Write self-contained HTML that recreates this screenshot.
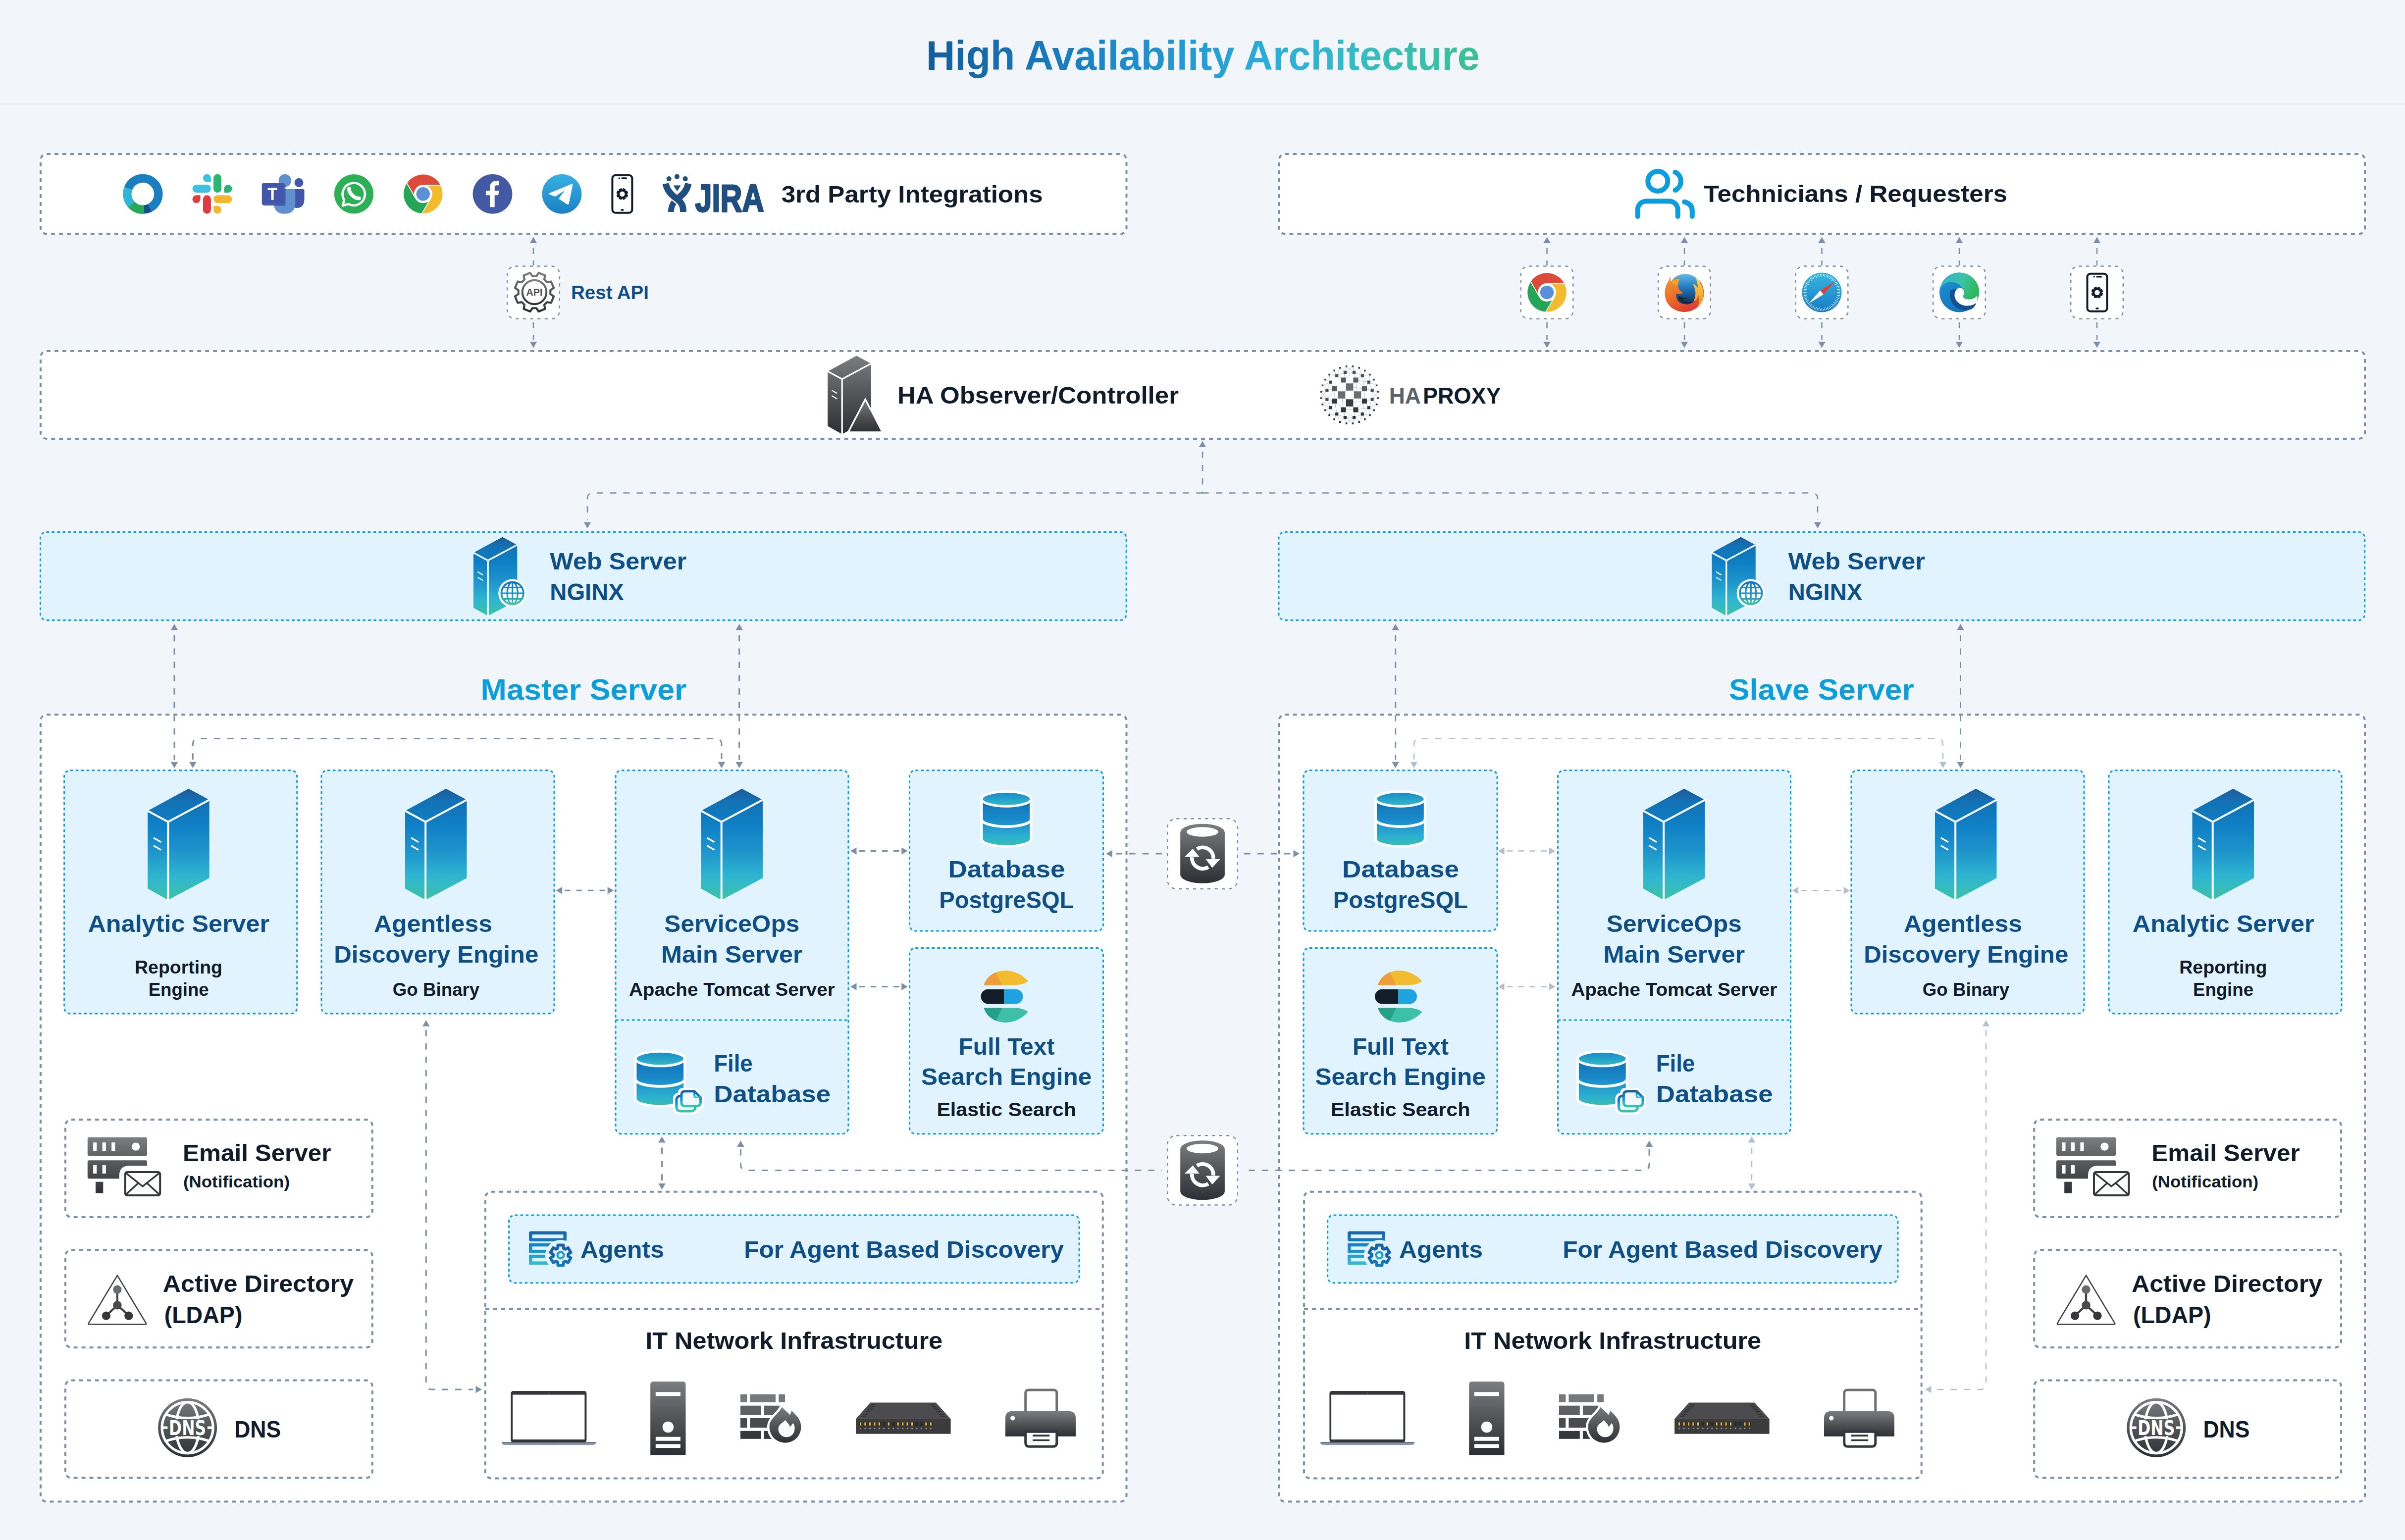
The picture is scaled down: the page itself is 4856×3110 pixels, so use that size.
<!DOCTYPE html>
<html><head><meta charset="utf-8"><title>High Availability Architecture</title>
<style>
html,body{margin:0;padding:0;background:#f2f5fa;}
body{width:4856px;height:3110px;overflow:hidden;}
svg{display:block;font-family:"Liberation Sans",sans-serif;}
</style></head><body>
<svg width="4856" height="3110" viewBox="0 0 4856 3110">
<defs>

<linearGradient id="tg" x1="0" y1="0" x2="1" y2="0"><stop offset="0" stop-color="#145d9b"/><stop offset="0.3" stop-color="#1a84c7"/><stop offset="0.62" stop-color="#2badda"/><stop offset="0.8" stop-color="#36bdc0"/><stop offset="1" stop-color="#3cc093"/></linearGradient>
<linearGradient id="bg" x1="0" y1="0" x2="0" y2="1"><stop offset="0" stop-color="#1f5a98"/><stop offset="0.12" stop-color="#1272b6"/><stop offset="0.32" stop-color="#0f7fc4"/><stop offset="0.55" stop-color="#1d93cc"/><stop offset="0.8" stop-color="#2fb6d0"/><stop offset="1" stop-color="#3dc2a2"/></linearGradient>
<linearGradient id="gg" x1="0" y1="0" x2="0" y2="1"><stop offset="0" stop-color="#7c7d80"/><stop offset="0.5" stop-color="#535456"/><stop offset="1" stop-color="#2c3035"/></linearGradient>
<linearGradient id="tel" x1="0" y1="0" x2="0" y2="1"><stop offset="0" stop-color="#38b0e3"/><stop offset="1" stop-color="#1a80c4"/></linearGradient>
<linearGradient id="saf" x1="0" y1="0" x2="0" y2="1"><stop offset="0" stop-color="#33b8e0"/><stop offset="1" stop-color="#1a7ac6"/></linearGradient>
<linearGradient id="ffg" x1="0" y1="0" x2="0" y2="1"><stop offset="0" stop-color="#5fbce8"/><stop offset="0.45" stop-color="#1f72b8"/><stop offset="1" stop-color="#14233f"/></linearGradient>
<linearGradient id="fox" x1="0.1" y1="0" x2="0.6" y2="1"><stop offset="0" stop-color="#f29a2e"/><stop offset="0.6" stop-color="#e9652c"/><stop offset="1" stop-color="#dc3a33"/></linearGradient>
<linearGradient id="foxy" x1="0" y1="0" x2="0" y2="1"><stop offset="0" stop-color="#fbd34a"/><stop offset="1" stop-color="#ef8a2a"/></linearGradient>
<linearGradient id="edt" x1="0" y1="0" x2="1" y2="0.4"><stop offset="0" stop-color="#2fb2d6"/><stop offset="0.6" stop-color="#3cc3a6"/><stop offset="1" stop-color="#30b95c"/></linearGradient>
<linearGradient id="edb" x1="0" y1="0" x2="0.6" y2="1"><stop offset="0" stop-color="#1b94d4"/><stop offset="1" stop-color="#1672bb"/></linearGradient>
<linearGradient id="glb" gradientUnits="userSpaceOnUse" x1="0" y1="-24" x2="0" y2="24"><stop offset="0" stop-color="#1272b6"/><stop offset="0.5" stop-color="#1d93cc"/><stop offset="1" stop-color="#3dc2a2"/></linearGradient>
<linearGradient id="agg" gradientUnits="userSpaceOnUse" x1="0" y1="0" x2="0" y2="73"><stop offset="0" stop-color="#1b62a6"/><stop offset="0.25" stop-color="#1379c0"/><stop offset="0.6" stop-color="#1f97cf"/><stop offset="0.88" stop-color="#33b9cd"/><stop offset="1" stop-color="#3cc1a8"/></linearGradient>
<linearGradient id="emg" gradientUnits="userSpaceOnUse" x1="0" y1="0" x2="0" y2="115"><stop offset="0" stop-color="#7c7d80"/><stop offset="0.5" stop-color="#535456"/><stop offset="1" stop-color="#2c3035"/></linearGradient>
<linearGradient id="dng" gradientUnits="userSpaceOnUse" x1="0" y1="-59.5" x2="0" y2="59.5"><stop offset="0" stop-color="#7c7d80"/><stop offset="0.5" stop-color="#535456"/><stop offset="1" stop-color="#2c3035"/></linearGradient>
<linearGradient id="dbt" x1="0" y1="0" x2="0" y2="1"><stop offset="0" stop-color="#1787cb"/><stop offset="1" stop-color="#33bcc6"/></linearGradient>
<linearGradient id="dbb" x1="0" y1="0" x2="0" y2="1"><stop offset="0" stop-color="#0f6fb6"/><stop offset="0.45" stop-color="#1a8ccb"/><stop offset="0.8" stop-color="#2cb0d0"/><stop offset="1" stop-color="#39bfb0"/></linearGradient>

</defs>
<rect width="4856" height="3110" fill="#f2f5fa"/>
<rect x="0" y="209" width="4856" height="2" fill="#e2e6ec"/>
<text x="1870" y="141.4" font-size="83" font-weight="bold" fill="url(#tg)" textLength="1117.6" lengthAdjust="spacingAndGlyphs">High Availability Architecture</text>
<rect x="80" y="309" width="2196.5" height="165.3" rx="14" fill="#fff"/>
<rect x="82" y="311" width="2192.5" height="161.3" rx="12" fill="none" stroke="#7b8fa9" stroke-width="4" stroke-dasharray="7.998 7.998"/>
<rect x="2580.5" y="309" width="2196.5" height="165.3" rx="14" fill="#fff"/>
<rect x="2582.5" y="311" width="2192.5" height="161.3" rx="12" fill="none" stroke="#7b8fa9" stroke-width="4" stroke-dasharray="7.998 7.998"/>
<rect x="80" y="707" width="4697.0" height="181.0" rx="14" fill="#fff"/>
<rect x="82" y="709" width="4693.0" height="177.0" rx="12" fill="none" stroke="#7b8fa9" stroke-width="4" stroke-dasharray="8.006 8.006"/>
<g transform="translate(288.4,391.7)"><path d="M-29.49 -11.08A31.5 31.5 0 1 1 14.40 28.02" fill="none" stroke="#197fc1" stroke-width="17.4"/><path d="M14.40 28.02A31.5 31.5 0 0 1 2.31 31.42" fill="none" stroke="#0f5289" stroke-width="17.4"/><path d="M2.31 31.42A31.5 31.5 0 0 1 -23.34 21.16" fill="none" stroke="#27a95c" stroke-width="17.4"/><path d="M-23.34 21.16A31.5 31.5 0 0 1 -29.49 -11.08" fill="none" stroke="#2fb6d6" stroke-width="17.4"/></g>
<g transform="translate(388.5,351.7)"><path d="M29.4 0a8 8 0 0 1 8 8v8h-8a8 8 0 0 1 0-16z" fill="#3dc0e2"/><rect x="0" y="21.4" width="37.4" height="16" rx="8" fill="#3dc0e2"/><rect x="42.6" y="0" width="16" height="37.4" rx="8" fill="#2bb574"/><path d="M72 21.4a8 8 0 0 1 0 16h-8v-8a8 8 0 0 1 8-8z" fill="#2bb574"/><path d="M8 42.6h8v8a8 8 0 0 1-8 8a8 8 0 0 1 0-16z" fill="#dd3d40"/><rect x="21.4" y="42.6" width="16" height="37.4" rx="8" fill="#dd3d40"/><rect x="42.6" y="42.6" width="37.4" height="16" rx="8" fill="#f2b930"/><path d="M42.6 64h8a8 8 0 0 1 0 16a8 8 0 0 1-8-8z" fill="#f2b930"/></g>
<g transform="translate(528.0,351.7)"><circle cx="75.5" cy="17.1" r="9" fill="#4356a9"/><path d="M58 30.3H83.5Q86.5 30.3 86.5 33.3V50Q86.5 68.3 71 68.3Q58 68.3 58 50Z" fill="#4356a9"/><circle cx="47.4" cy="12.9" r="12.8" fill="#6190cf"/><path d="M25 30.3H65.2Q68.2 30.3 68.2 33.3V58Q68.2 80.1 46.6 80.1Q25 80.1 25 58Z" fill="#6190cf"/><rect x="3" y="20.5" width="45.8" height="43.7" rx="3" fill="#2f3f86" opacity="0.45"/><rect x="0.8" y="18.3" width="45.8" height="43.7" rx="3" fill="#4356a9"/><path d="M12.5 27.7H31.6V32.4H24.6V52H19.6V32.4H12.5Z" fill="#fff"/></g>
<g transform="translate(714.5,391.7)"><circle r="39.7" fill="#2bb055"/><path d="M-22.5 23.5L-19.6 12.2A22.6 22.6 0 1 1 -11.2 20.3Z" fill="none" stroke="#fff" stroke-width="4.6" stroke-linejoin="round"/><path d="M-9.5 -10.5C-10.5 -3 1 10 10.5 8.8" fill="none" stroke="#fff" stroke-width="7.5" stroke-linecap="round"/><path d="M-9.5 -10.5C-9 -4 2 8 10.5 8.8" fill="none" stroke="#2bb055" stroke-width="0"/></g>
<g transform="translate(854.3,391.7)"><path d="M-33.20 -22.31A40 40 0 0 1 35.92 -17.60L0.00 -17.60A17.6 17.6 0 0 0 -15.24 8.80Z" fill="#de4a39" stroke="#fff" stroke-width="1.6" stroke-linejoin="round"/><path d="M35.92 -17.60A40 40 0 0 1 -2.72 39.91L15.24 8.80A17.6 17.6 0 0 0 -0.00 -17.60Z" fill="#f2ba2d" stroke="#fff" stroke-width="1.6" stroke-linejoin="round"/><path d="M-2.72 39.91A40 40 0 0 1 -33.20 -22.31L-15.24 8.80A17.6 17.6 0 0 0 15.24 8.80Z" fill="#25a556" stroke="#fff" stroke-width="1.6" stroke-linejoin="round"/><circle r="17.6" fill="#fff"/><circle r="13.7" fill="#5b90d8"/></g>
<g transform="translate(994.5,391.7)"><circle r="40" fill="#4459a4"/><path d="M-5.3 26.6V2.5H-13.6V-6.6H-5.3V-13Q-5.3 -26 7 -26H13.3V-17.5H8.5Q4.2 -17.5 4.2 -13V-6.6H13L11.7 2.5H4.2V26.6Z" fill="#fff"/></g>
<g transform="translate(1134.5,391.7)"><circle r="40" fill="url(#tel)"/><path d="M-26 -0.5L20 -19.5Q21.5 -19.5 21 -17.5L13.5 19.5Q12.5 21.5 10.5 20L-5.5 9.5L8.5 -9.5L-13.6 4.5Z" fill="#fff" stroke="#fff" stroke-width="1.5" stroke-linejoin="round"/></g>
<g transform="translate(1234.4,351.7)"><rect x="2" y="2" width="40" height="76" rx="6.5" fill="#fff" stroke="#111c2b" stroke-width="4"/><circle cx="15.8" cy="8.2" r="1.7" fill="#111c2b"/><path d="M21.5 8.2H30" stroke="#111c2b" stroke-width="3.2" stroke-linecap="round"/><ellipse cx="22" cy="72.2" rx="3.2" ry="1.8" fill="#111c2b"/><g transform="translate(22,40.1)"><path d="M7.94 1.00L10.34 2.31L8.95 5.68L6.32 4.91L4.91 6.32L5.68 8.95L2.31 10.34L1.00 7.94L-1.00 7.94L-2.31 10.34L-5.68 8.95L-4.91 6.32L-6.32 4.91L-8.95 5.68L-10.34 2.31L-7.94 1.00L-7.94 -1.00L-10.34 -2.31L-8.95 -5.68L-6.32 -4.91L-4.91 -6.32L-5.68 -8.95L-2.31 -10.34L-1.00 -7.94L1.00 -7.94L2.31 -10.34L5.68 -8.95L4.91 -6.32L6.32 -4.91L8.95 -5.68L10.34 -2.31L7.94 -1.00Z" fill="#111c2b" stroke="#111c2b" stroke-width="2.6" stroke-linejoin="round"/><circle r="5.2" fill="#fff"/></g></g>
<g transform="translate(1338.0,351.7)"><circle cx="12.7" cy="9.4" r="5" fill="#1f4e7f"/><circle cx="28.9" cy="4.9" r="5" fill="#1f4e7f"/><circle cx="45.7" cy="9.4" r="5" fill="#1f4e7f"/><path d="M22.5 23.2H35.9L29.2 33.9Z" fill="#1f4e7f" stroke="#1f4e7f" stroke-width="1" stroke-linejoin="round"/><path d="M51.8 19C49 34 40 42 29 50" fill="none" stroke="#1f4e7f" stroke-width="13"/><path d="M25.5 53.5C19.5 60 16.8 68 16.6 76.3" fill="none" stroke="#1f4e7f" stroke-width="12"/><path d="M6.2 19C9 34 18 42 29 50S41.5 66 41.6 76.3" fill="none" stroke="#fff" stroke-width="18"/><path d="M6.2 19C9 34 18 42 29 50S41.5 66 41.6 76.3" fill="none" stroke="#1f4e7f" stroke-width="13"/><path d="M51.8 19C49 34 40 42 33 47" fill="none" stroke="#1f4e7f" stroke-width="13"/><rect x="-3" y="76.3" width="64" height="12" fill="#fff"/><rect x="-3" y="8" width="9" height="11.5" fill="#fff" opacity="0"/></g>
<text x="1403.5" y="426.6" font-size="77" font-weight="bold" fill="#1f4e7f" textLength="139.0" lengthAdjust="spacingAndGlyphs" stroke="#1f4e7f" stroke-width="3" stroke-linejoin="round">JIRA</text>
<text x="1577.7" y="408.8" font-size="48" font-weight="bold" fill="#111c2b" textLength="528.0" lengthAdjust="spacingAndGlyphs">3rd Party Integrations</text>
<g transform="translate(3302.0,340.7)"><g fill="none" stroke="#0b9edc" stroke-width="10" stroke-linecap="round"><circle cx="45.3" cy="25.2" r="20"/><path d="M4.7 96.3V83a17.5 17.5 0 0 1 17.5-17.5h46a17.5 17.5 0 0 1 17.5 17.5V96.3"/><path d="M80.5 7.1A20 20 0 0 1 80.5 43.3"/><path d="M99 67Q114.8 71 114.8 85V96.3"/></g></g>
<text x="3440.0" y="407.8" font-size="48" font-weight="bold" fill="#111c2b" textLength="613.0" lengthAdjust="spacingAndGlyphs">Technicians / Requesters</text>
<polygon points="1077.0,478.6 1069.8,491.1 1084.2,491.1" fill="#7b8fa9"/>
<polygon points="1077.0,702.6 1069.8,690.1 1084.2,690.1" fill="#7b8fa9"/>
<path d="M1077 501.1V686.1" fill="none" stroke="#7b8fa9" stroke-width="2.5" stroke-dasharray="11.8 13.2"/>
<rect x="1022.95" y="536.25" width="108.1" height="108.8" rx="17.25" fill="#fff"/>
<rect x="1024.2" y="537.5" width="105.6" height="106.3" rx="16" fill="none" stroke="#7b8fa9" stroke-width="2.5" stroke-dasharray="6.459 8.220"/>
<g transform="translate(1079.0,590.0)"><path d="M32.27 3.89L39.06 8.60L33.71 21.54L25.57 20.06L20.06 25.57L21.54 33.71L8.60 39.06L3.89 32.27L-3.89 32.27L-8.60 39.06L-21.54 33.71L-20.06 25.57L-25.57 20.06L-33.71 21.54L-39.06 8.60L-32.27 3.89L-32.27 -3.89L-39.06 -8.60L-33.71 -21.54L-25.57 -20.06L-20.06 -25.57L-21.54 -33.71L-8.60 -39.06L-3.89 -32.27L3.89 -32.27L8.60 -39.06L21.54 -33.71L20.06 -25.57L25.57 -20.06L33.71 -21.54L39.06 -8.60L32.27 -3.89Z" fill="none" stroke="url(#gg)" stroke-width="4.2" stroke-linejoin="round"/><circle r="24.3" fill="none" stroke="url(#gg)" stroke-width="4"/><text x="-16.5" y="7.2" font-size="20" font-weight="bold" fill="#4e4f52" textLength="33" lengthAdjust="spacingAndGlyphs">API</text></g>
<text x="1153.0" y="604.0" font-size="39.5" font-weight="bold" fill="#0f4f86" textLength="157.0" lengthAdjust="spacingAndGlyphs">Rest API</text>
<polygon points="3123.5,478.6 3116.2,491.1 3130.8,491.1" fill="#7b8fa9"/>
<polygon points="3123.5,702.6 3116.2,690.1 3130.8,690.1" fill="#7b8fa9"/>
<path d="M3123.5 501.1V686.1" fill="none" stroke="#7b8fa9" stroke-width="2.5" stroke-dasharray="11.8 13.2"/>
<rect x="3069.45" y="536.25" width="108.1" height="108.8" rx="17.25" fill="#fff"/>
<rect x="3070.7" y="537.5" width="105.6" height="106.3" rx="16" fill="none" stroke="#7b8fa9" stroke-width="2.5" stroke-dasharray="6.459 8.220"/>
<polygon points="3401.0,478.6 3393.8,491.1 3408.2,491.1" fill="#7b8fa9"/>
<polygon points="3401.0,702.6 3393.8,690.1 3408.2,690.1" fill="#7b8fa9"/>
<path d="M3401 501.1V686.1" fill="none" stroke="#7b8fa9" stroke-width="2.5" stroke-dasharray="11.8 13.2"/>
<rect x="3346.95" y="536.25" width="108.1" height="108.8" rx="17.25" fill="#fff"/>
<rect x="3348.2" y="537.5" width="105.6" height="106.3" rx="16" fill="none" stroke="#7b8fa9" stroke-width="2.5" stroke-dasharray="6.459 8.220"/>
<polygon points="3678.5,478.6 3671.2,491.1 3685.8,491.1" fill="#7b8fa9"/>
<polygon points="3678.5,702.6 3671.2,690.1 3685.8,690.1" fill="#7b8fa9"/>
<path d="M3678.5 501.1V686.1" fill="none" stroke="#7b8fa9" stroke-width="2.5" stroke-dasharray="11.8 13.2"/>
<rect x="3624.45" y="536.25" width="108.1" height="108.8" rx="17.25" fill="#fff"/>
<rect x="3625.7" y="537.5" width="105.6" height="106.3" rx="16" fill="none" stroke="#7b8fa9" stroke-width="2.5" stroke-dasharray="6.459 8.220"/>
<polygon points="3956.0,478.6 3948.8,491.1 3963.2,491.1" fill="#7b8fa9"/>
<polygon points="3956.0,702.6 3948.8,690.1 3963.2,690.1" fill="#7b8fa9"/>
<path d="M3956 501.1V686.1" fill="none" stroke="#7b8fa9" stroke-width="2.5" stroke-dasharray="11.8 13.2"/>
<rect x="3901.95" y="536.25" width="108.1" height="108.8" rx="17.25" fill="#fff"/>
<rect x="3903.2" y="537.5" width="105.6" height="106.3" rx="16" fill="none" stroke="#7b8fa9" stroke-width="2.5" stroke-dasharray="6.459 8.220"/>
<polygon points="4234.0,478.6 4226.8,491.1 4241.2,491.1" fill="#7b8fa9"/>
<polygon points="4234.0,702.6 4226.8,690.1 4241.2,690.1" fill="#7b8fa9"/>
<path d="M4234 501.1V686.1" fill="none" stroke="#7b8fa9" stroke-width="2.5" stroke-dasharray="11.8 13.2"/>
<rect x="4179.95" y="536.25" width="108.1" height="108.8" rx="17.25" fill="#fff"/>
<rect x="4181.2" y="537.5" width="105.6" height="106.3" rx="16" fill="none" stroke="#7b8fa9" stroke-width="2.5" stroke-dasharray="6.459 8.220"/>
<g transform="translate(3123.5,590.5)"><path d="M-33.20 -22.31A40 40 0 0 1 35.92 -17.60L0.00 -17.60A17.6 17.6 0 0 0 -15.24 8.80Z" fill="#de4a39" stroke="#fff" stroke-width="1.6" stroke-linejoin="round"/><path d="M35.92 -17.60A40 40 0 0 1 -2.72 39.91L15.24 8.80A17.6 17.6 0 0 0 -0.00 -17.60Z" fill="#f2ba2d" stroke="#fff" stroke-width="1.6" stroke-linejoin="round"/><path d="M-2.72 39.91A40 40 0 0 1 -33.20 -22.31L-15.24 8.80A17.6 17.6 0 0 0 15.24 8.80Z" fill="#25a556" stroke="#fff" stroke-width="1.6" stroke-linejoin="round"/><circle r="17.6" fill="#fff"/><circle r="13.7" fill="#5b90d8"/></g>
<g transform="translate(3401.0,590.5)"><circle cx="1.5" cy="-4" r="33.5" fill="url(#ffg)"/><path d="M-31 -25C-36 -18 -40 -8 -39.5 3C-39 24 -22 39.5 0 39.5C22 39.5 39.5 22 39.5 2C39.5 -8 36 -18 30 -25C34 -12 32 4 24 14C16 25 0 27 -10 20C-16 15 -18 8 -16 2C-12 4 -6 4 -2 1C-8 -2 -13 -8 -13 -14C-18 -14 -24 -17 -27 -22C-28 -25 -28.5 -29 -28 -32C-30 -30 -31 -27 -31 -25Z" fill="url(#fox)"/><path d="M-27 -22C-22 -27 -14 -29 -8 -27C-12 -24 -13 -19 -13 -14C-18 -14 -24 -17 -27 -22Z" fill="#f3a02f"/><path d="M22 -30C32 -22 38 -10 38.5 2C39 14 33 26 24 33C30 24 31 14 28 6C27 12 23 17 18 19C24 8 24 -6 17 -17C22 -16 25 -13 27 -9C27 -17 25 -24 22 -30Z" fill="url(#foxy)"/><path d="M-12 12C-6 22 8 25 18 19C10 21 0 19 -5 13C-1 14 4 13 7 10C1 12 -7 11 -12 6Z" fill="#16243c"/></g>
<g transform="translate(3678.5,590.5)"><circle r="40" fill="url(#saf)"/><path d="M31.0 0.0L37.0 0.0M33.4 2.9L36.9 3.2M30.5 5.4L36.4 6.4M32.4 8.7L35.7 9.6M29.1 10.6L34.8 12.7M30.4 14.2L33.5 15.6M26.8 15.5L32.0 18.5M27.4 19.2L30.3 21.2M23.7 19.9L28.3 23.8M23.7 23.7L26.2 26.2M19.9 23.7L23.8 28.3M19.2 27.4L21.2 30.3M15.5 26.8L18.5 32.0M14.2 30.4L15.6 33.5M10.6 29.1L12.7 34.8M8.7 32.4L9.6 35.7M5.4 30.5L6.4 36.4M2.9 33.4L3.2 36.9M0.0 31.0L0.0 37.0M-2.9 33.4L-3.2 36.9M-5.4 30.5L-6.4 36.4M-8.7 32.4L-9.6 35.7M-10.6 29.1L-12.7 34.8M-14.2 30.4L-15.6 33.5M-15.5 26.8L-18.5 32.0M-19.2 27.4L-21.2 30.3M-19.9 23.7L-23.8 28.3M-23.7 23.7L-26.2 26.2M-23.7 19.9L-28.3 23.8M-27.4 19.2L-30.3 21.2M-26.8 15.5L-32.0 18.5M-30.4 14.2L-33.5 15.6M-29.1 10.6L-34.8 12.7M-32.4 8.7L-35.7 9.6M-30.5 5.4L-36.4 6.4M-33.4 2.9L-36.9 3.2M-31.0 0.0L-37.0 0.0M-33.4 -2.9L-36.9 -3.2M-30.5 -5.4L-36.4 -6.4M-32.4 -8.7L-35.7 -9.6M-29.1 -10.6L-34.8 -12.7M-30.4 -14.2L-33.5 -15.6M-26.8 -15.5L-32.0 -18.5M-27.4 -19.2L-30.3 -21.2M-23.7 -19.9L-28.3 -23.8M-23.7 -23.7L-26.2 -26.2M-19.9 -23.7L-23.8 -28.3M-19.2 -27.4L-21.2 -30.3M-15.5 -26.8L-18.5 -32.0M-14.2 -30.4L-15.6 -33.5M-10.6 -29.1L-12.7 -34.8M-8.7 -32.4L-9.6 -35.7M-5.4 -30.5L-6.4 -36.4M-2.9 -33.4L-3.2 -36.9M-0.0 -31.0L-0.0 -37.0M2.9 -33.4L3.2 -36.9M5.4 -30.5L6.4 -36.4M8.7 -32.4L9.6 -35.7M10.6 -29.1L12.7 -34.8M14.2 -30.4L15.6 -33.5M15.5 -26.8L18.5 -32.0M19.2 -27.4L21.2 -30.3M19.9 -23.7L23.8 -28.3M23.7 -23.7L26.2 -26.2M23.7 -19.9L28.3 -23.8M27.4 -19.2L30.3 -21.2M26.8 -15.5L32.0 -18.5M30.4 -14.2L33.5 -15.6M29.1 -10.6L34.8 -12.7M32.4 -8.7L35.7 -9.6M30.5 -5.4L36.4 -6.4M33.4 -2.9L36.9 -3.2" stroke="#fff" stroke-width="1.1" opacity="0.9"/><path d="M27 -22.8L-3.3 -3.9L3.3 3.9Z" fill="#df4036"/><path d="M-26.6 22.5L-3.3 -3.9L3.3 3.9Z" fill="#fff"/></g>
<g transform="translate(3956.0,590.5)"><circle r="40" fill="url(#edb)"/><path d="M-39.6 -4C-37 -24 -20 -40 0 -40C22 -40 40 -22 40 -2C40 10 30 16 20 14C12 12.5 8 9 7.5 8.5C9.5 5 10 1 9 -3C6.5 -13 -4 -21 -17 -21C-28 -21 -36 -14 -39.6 -4Z" fill="url(#edt)"/><path d="M-18.5 -2C-21 8 -17 22 -6 30C4 37 17 38 26 33C30 30 33 26 34.5 21C31 24 24 27 15 27C2 27 -9 17 -9.5 6C-9.8 1 -8 -4 -5 -7C-11 -7 -16 -6 -18.5 -2Z" fill="#13508f"/><path d="M-9.5 6C-9.8 -2 -4 -9.5 1 -9.5C6 -9.5 10 -5 9.5 1C9.2 4 8.2 6.5 7.5 8.5C8 11 14 14.5 22 14C28 13.6 34 10 36.5 6.5C37 12 36.5 16 34.5 21C31 24 24 27 15 27C2 27 -9 17 -9.5 6Z" fill="#fff"/></g>
<g transform="translate(4212.5,550.7)"><rect x="2" y="2" width="40" height="76" rx="6.5" fill="#fff" stroke="#111c2b" stroke-width="4"/><circle cx="15.8" cy="8.2" r="1.7" fill="#111c2b"/><path d="M21.5 8.2H30" stroke="#111c2b" stroke-width="3.2" stroke-linecap="round"/><ellipse cx="22" cy="72.2" rx="3.2" ry="1.8" fill="#111c2b"/><g transform="translate(22,40.1)"><path d="M7.94 1.00L10.34 2.31L8.95 5.68L6.32 4.91L4.91 6.32L5.68 8.95L2.31 10.34L1.00 7.94L-1.00 7.94L-2.31 10.34L-5.68 8.95L-4.91 6.32L-6.32 4.91L-8.95 5.68L-10.34 2.31L-7.94 1.00L-7.94 -1.00L-10.34 -2.31L-8.95 -5.68L-6.32 -4.91L-4.91 -6.32L-5.68 -8.95L-2.31 -10.34L-1.00 -7.94L1.00 -7.94L2.31 -10.34L5.68 -8.95L4.91 -6.32L6.32 -4.91L8.95 -5.68L10.34 -2.31L7.94 -1.00Z" fill="#111c2b" stroke="#111c2b" stroke-width="2.6" stroke-linejoin="round"/><circle r="5.2" fill="#fff"/></g></g>
<g transform="translate(1671.2,718.4) scale(0.705)"><path d="M82.4 0L124.5 22.4L124.5 180.5L41.2 224.7L0 201.6L0 44.7Z" fill="url(#gg)"/><path d="M0 44.7L41.2 66.9L124.5 22.4M41.2 66.9L41.2 224.7" fill="none" stroke="#fff" stroke-width="4.6" stroke-linecap="square"/><path d="M11.8 99L27 107.8M11.8 114.8L27 123.6" stroke="#fff" stroke-width="3.2"/></g>
<g transform="translate(0.0,0.0)"><path d="M1747.1 808.4L1779 871.2H1715.3Z" fill="url(#gg)"/><path d="M1712.6 873L1747.1 806.4L1759 829" fill="none" stroke="#fff" stroke-width="3.4"/></g>
<text x="1812.0" y="814.8" font-size="48" font-weight="bold" fill="#111c2b" textLength="568.0" lengthAdjust="spacingAndGlyphs">HA Observer/Controller</text>
<g transform="translate(2725.0,797.5)"><path d="M0.0 -16.0L-12.4 -30.0M0.0 -16.0L12.4 -30.0M0.0 -16.0L30.0 -12.4M16.0 0.0L30.0 -12.4M16.0 0.0L30.0 12.4M16.0 0.0L12.4 -30.0M0.0 16.0L12.4 30.0M0.0 16.0L-12.4 30.0M0.0 16.0L30.0 12.4M-16.0 0.0L-30.0 12.4M-16.0 0.0L-30.0 -12.4M-16.0 0.0L-12.4 30.0M12.4 -30.0L25.8 -38.7M12.4 -30.0L9.1 -45.6M12.4 -30.0L38.7 -25.8M30.0 -12.4L38.7 -25.8M30.0 -12.4L45.6 -9.1M30.0 -12.4L25.8 -38.7M30.0 12.4L38.7 25.8M30.0 12.4L45.6 9.1M30.0 12.4L25.8 38.7M12.4 30.0L25.8 38.7M12.4 30.0L9.1 45.6M12.4 30.0L38.7 25.8M-12.4 30.0L-9.1 45.6M-12.4 30.0L-25.8 38.7M-12.4 30.0L9.1 45.6M-30.0 12.4L-38.7 25.8M-30.0 12.4L-45.6 9.1M-30.0 12.4L-25.8 38.7M-30.0 -12.4L-45.6 -9.1M-30.0 -12.4L-38.7 -25.8M-30.0 -12.4L-45.6 9.1M-12.4 -30.0L-9.1 -45.6M-12.4 -30.0L-25.8 -38.7M-12.4 -30.0L9.1 -45.6M9.1 -45.6L6.5 -57.6M9.1 -45.6L19.2 -54.7M9.1 -45.6L-6.5 -57.6M25.8 -38.7L30.9 -49.1M25.8 -38.7L41.0 -41.0M25.8 -38.7L19.2 -54.7M38.7 -25.8L49.1 -30.9M38.7 -25.8L41.0 -41.0M38.7 -25.8L54.7 -19.2M45.6 -9.1L57.6 -6.5M45.6 -9.1L54.7 -19.2M45.6 -9.1L57.6 6.5M45.6 9.1L57.6 6.5M45.6 9.1L54.7 19.2M45.6 9.1L57.6 -6.5M38.7 25.8L49.1 30.9M38.7 25.8L41.0 41.0M38.7 25.8L54.7 19.2M25.8 38.7L30.9 49.1M25.8 38.7L41.0 41.0M25.8 38.7L19.2 54.7M9.1 45.6L6.5 57.6M9.1 45.6L19.2 54.7M9.1 45.6L-6.5 57.6M-9.1 45.6L-6.5 57.6M-9.1 45.6L-19.2 54.7M-9.1 45.6L6.5 57.6M-25.8 38.7L-30.9 49.1M-25.8 38.7L-41.0 41.0M-25.8 38.7L-19.2 54.7M-38.7 25.8L-49.1 30.9M-38.7 25.8L-41.0 41.0M-38.7 25.8L-54.7 19.2M-45.6 9.1L-57.6 6.5M-45.6 9.1L-54.7 19.2M-45.6 9.1L-57.6 -6.5M-45.6 -9.1L-57.6 -6.5M-45.6 -9.1L-54.7 -19.2M-45.6 -9.1L-57.6 6.5M-38.7 -25.8L-49.1 -30.9M-38.7 -25.8L-41.0 -41.0M-38.7 -25.8L-54.7 -19.2M-25.8 -38.7L-30.9 -49.1M-25.8 -38.7L-41.0 -41.0M-25.8 -38.7L-19.2 -54.7M-9.1 -45.6L-6.5 -57.6M-9.1 -45.6L-19.2 -54.7M-9.1 -45.6L6.5 -57.6M0.0 -16.0L16.0 0.0M16.0 0.0L0.0 16.0M0.0 16.0L-16.0 0.0M-16.0 0.0L0.0 -16.0M12.4 -30.0L30.0 -12.4M30.0 -12.4L30.0 12.4M30.0 12.4L12.4 30.0M12.4 30.0L-12.4 30.0M-12.4 30.0L-30.0 12.4M-30.0 12.4L-30.0 -12.4M-30.0 -12.4L-12.4 -30.0M-12.4 -30.0L12.4 -30.0M9.1 -45.6L25.8 -38.7M25.8 -38.7L38.7 -25.8M38.7 -25.8L45.6 -9.1M45.6 -9.1L45.6 9.1M45.6 9.1L38.7 25.8M38.7 25.8L25.8 38.7M25.8 38.7L9.1 45.6M9.1 45.6L-9.1 45.6M-9.1 45.6L-25.8 38.7M-25.8 38.7L-38.7 25.8M-38.7 25.8L-45.6 9.1M-45.6 9.1L-45.6 -9.1M-45.6 -9.1L-38.7 -25.8M-38.7 -25.8L-25.8 -38.7M-25.8 -38.7L-9.1 -45.6M-9.1 -45.6L9.1 -45.6" stroke="#9fb0c8" stroke-width="0.8" fill="none"/><rect x="-7.2" y="-23.2" width="14.5" height="14.5" fill="#6b6c6f"/><rect x="8.8" y="-7.2" width="14.5" height="14.5" fill="#6b6c6f"/><rect x="-7.2" y="8.8" width="14.5" height="14.5" fill="#3a3c40"/><rect x="-23.2" y="-7.2" width="14.5" height="14.5" fill="#6b6c6f"/><rect x="7.4" y="-35.0" width="10" height="10" fill="#5a5b5e"/><rect x="25.0" y="-17.4" width="10" height="10" fill="#5a5b5e"/><rect x="25.0" y="7.4" width="10" height="10" fill="#34363a"/><rect x="7.4" y="25.0" width="10" height="10" fill="#34363a"/><rect x="-17.4" y="25.0" width="10" height="10" fill="#34363a"/><rect x="-35.0" y="7.4" width="10" height="10" fill="#34363a"/><rect x="-35.0" y="-17.4" width="10" height="10" fill="#5a5b5e"/><rect x="-17.4" y="-35.0" width="10" height="10" fill="#5a5b5e"/><rect x="6.0" y="-48.7" width="6.2" height="6.2" fill="#4a4b4e"/><rect x="22.7" y="-41.8" width="6.2" height="6.2" fill="#4a4b4e"/><rect x="35.6" y="-28.9" width="6.2" height="6.2" fill="#4a4b4e"/><rect x="42.5" y="-12.2" width="6.2" height="6.2" fill="#4a4b4e"/><rect x="42.5" y="6.0" width="6.2" height="6.2" fill="#4a4b4e"/><rect x="35.6" y="22.7" width="6.2" height="6.2" fill="#2f3135"/><rect x="22.7" y="35.6" width="6.2" height="6.2" fill="#2f3135"/><rect x="6.0" y="42.5" width="6.2" height="6.2" fill="#2f3135"/><rect x="-12.2" y="42.5" width="6.2" height="6.2" fill="#2f3135"/><rect x="-28.9" y="35.6" width="6.2" height="6.2" fill="#2f3135"/><rect x="-41.8" y="22.7" width="6.2" height="6.2" fill="#2f3135"/><rect x="-48.7" y="6.0" width="6.2" height="6.2" fill="#4a4b4e"/><rect x="-48.7" y="-12.2" width="6.2" height="6.2" fill="#4a4b4e"/><rect x="-41.8" y="-28.9" width="6.2" height="6.2" fill="#4a4b4e"/><rect x="-28.9" y="-41.8" width="6.2" height="6.2" fill="#4a4b4e"/><rect x="-12.2" y="-48.7" width="6.2" height="6.2" fill="#4a4b4e"/><rect x="4.7" y="-59.4" width="3.6" height="3.6" fill="#444548"/><rect x="17.4" y="-56.5" width="3.6" height="3.6" fill="#444548"/><rect x="29.1" y="-50.9" width="3.6" height="3.6" fill="#444548"/><rect x="39.2" y="-42.8" width="3.6" height="3.6" fill="#444548"/><rect x="47.3" y="-32.7" width="3.6" height="3.6" fill="#444548"/><rect x="52.9" y="-21.0" width="3.6" height="3.6" fill="#444548"/><rect x="55.8" y="-8.3" width="3.6" height="3.6" fill="#444548"/><rect x="55.8" y="4.7" width="3.6" height="3.6" fill="#444548"/><rect x="52.9" y="17.4" width="3.6" height="3.6" fill="#2c2e32"/><rect x="47.3" y="29.1" width="3.6" height="3.6" fill="#2c2e32"/><rect x="39.2" y="39.2" width="3.6" height="3.6" fill="#2c2e32"/><rect x="29.1" y="47.3" width="3.6" height="3.6" fill="#2c2e32"/><rect x="17.4" y="52.9" width="3.6" height="3.6" fill="#2c2e32"/><rect x="4.7" y="55.8" width="3.6" height="3.6" fill="#2c2e32"/><rect x="-8.3" y="55.8" width="3.6" height="3.6" fill="#2c2e32"/><rect x="-21.0" y="52.9" width="3.6" height="3.6" fill="#2c2e32"/><rect x="-32.7" y="47.3" width="3.6" height="3.6" fill="#2c2e32"/><rect x="-42.8" y="39.2" width="3.6" height="3.6" fill="#2c2e32"/><rect x="-50.9" y="29.1" width="3.6" height="3.6" fill="#2c2e32"/><rect x="-56.5" y="17.4" width="3.6" height="3.6" fill="#2c2e32"/><rect x="-59.4" y="4.7" width="3.6" height="3.6" fill="#444548"/><rect x="-59.4" y="-8.3" width="3.6" height="3.6" fill="#444548"/><rect x="-56.5" y="-21.0" width="3.6" height="3.6" fill="#444548"/><rect x="-50.9" y="-32.7" width="3.6" height="3.6" fill="#444548"/><rect x="-42.8" y="-42.8" width="3.6" height="3.6" fill="#444548"/><rect x="-32.7" y="-50.9" width="3.6" height="3.6" fill="#444548"/><rect x="-21.0" y="-56.5" width="3.6" height="3.6" fill="#444548"/><rect x="-8.3" y="-59.4" width="3.6" height="3.6" fill="#444548"/></g>
<text x="2804.7" y="814.5" font-size="47" font-weight="bold" fill="#5d6168" textLength="64.0" lengthAdjust="spacingAndGlyphs">HA</text>
<text x="2872.9" y="814.5" font-size="47" font-weight="bold" fill="#111c2b" textLength="157.5" lengthAdjust="spacingAndGlyphs">PROXY</text>
<polygon points="2428.0,890.4 2420.8,902.9 2435.2,902.9" fill="#7b8fa9"/>
<path d="M2428 912V995.4" fill="none" stroke="#7b8fa9" stroke-width="2.5" stroke-dasharray="12.7 14.2"/>
<path d="M2428 995.4H1198Q1186 995.4 1186 1007.4V1050" fill="none" stroke="#7b8fa9" stroke-width="2.5" stroke-dasharray="12.7 14.2"/>
<path d="M2428 995.4H3658Q3670 995.4 3670 1007.4V1050" fill="none" stroke="#7b8fa9" stroke-width="2.5" stroke-dasharray="12.7 14.2"/>
<polygon points="1186.0,1067.0 1178.8,1054.5 1193.2,1054.5" fill="#7b8fa9"/>
<polygon points="3670.0,1067.0 3662.8,1054.5 3677.2,1054.5" fill="#7b8fa9"/>
<rect x="80.0" y="1073.0" width="2195.7" height="180.9" rx="13.5" fill="#e1f3fe"/>
<rect x="81.5" y="1074.5" width="2192.7" height="177.9" rx="12" fill="none" stroke="#0b9bd7" stroke-width="3" stroke-dasharray="5.502 5.502"/>
<g transform="translate(956.0,1084.5) scale(0.709)"><path d="M82.4 0L124.5 22.4L124.5 180.5L41.2 224.7L0 201.6L0 44.7Z" fill="url(#bg)"/><path d="M0 44.7L41.2 66.9L124.5 22.4M41.2 66.9L41.2 224.7" fill="none" stroke="#fff" stroke-width="4.6" stroke-linecap="square"/><path d="M11.8 99L27 107.8M11.8 114.8L27 123.6" stroke="#fff" stroke-width="3.2"/></g>
<g transform="translate(1034.7,1198.0)"><circle r="28.5" fill="#fff"/><circle r="22.3" fill="#fff" stroke="url(#glb)" stroke-width="3.8"/><g fill="none" stroke="url(#glb)" stroke-width="3.2"><ellipse rx="10.5" ry="22.3"/><path d="M0 -22.5V22.5"/><path d="M-22.5 0H22.5"/><path d="M-19.5 -11.5H19.5"/><path d="M-19.5 11.5H19.5"/></g></g>
<text x="1110.3" y="1149.8" font-size="48" font-weight="bold" fill="#0f4f86" textLength="276.0" lengthAdjust="spacingAndGlyphs">Web Server</text>
<text x="1110.3" y="1211.7" font-size="48" font-weight="bold" fill="#0f4f86" textLength="149.5" lengthAdjust="spacingAndGlyphs">NGINX</text>
<rect x="2580.5" y="1073.0" width="2195.7" height="180.9" rx="13.5" fill="#e1f3fe"/>
<rect x="2582.0" y="1074.5" width="2192.7" height="177.9" rx="12" fill="none" stroke="#0b9bd7" stroke-width="3" stroke-dasharray="5.502 5.502"/>
<g transform="translate(3456.5,1084.5) scale(0.709)"><path d="M82.4 0L124.5 22.4L124.5 180.5L41.2 224.7L0 201.6L0 44.7Z" fill="url(#bg)"/><path d="M0 44.7L41.2 66.9L124.5 22.4M41.2 66.9L41.2 224.7" fill="none" stroke="#fff" stroke-width="4.6" stroke-linecap="square"/><path d="M11.8 99L27 107.8M11.8 114.8L27 123.6" stroke="#fff" stroke-width="3.2"/></g>
<g transform="translate(3535.2,1198.0)"><circle r="28.5" fill="#fff"/><circle r="22.3" fill="#fff" stroke="url(#glb)" stroke-width="3.8"/><g fill="none" stroke="url(#glb)" stroke-width="3.2"><ellipse rx="10.5" ry="22.3"/><path d="M0 -22.5V22.5"/><path d="M-22.5 0H22.5"/><path d="M-19.5 -11.5H19.5"/><path d="M-19.5 11.5H19.5"/></g></g>
<text x="3610.8" y="1149.8" font-size="48" font-weight="bold" fill="#0f4f86" textLength="276.0" lengthAdjust="spacingAndGlyphs">Web Server</text>
<text x="3610.8" y="1211.7" font-size="48" font-weight="bold" fill="#0f4f86" textLength="149.5" lengthAdjust="spacingAndGlyphs">NGINX</text>
<text x="970.6" y="1413.4" font-size="59" font-weight="bold" fill="#0b9edc" textLength="416.0" lengthAdjust="spacingAndGlyphs">Master Server</text>
<text x="3491.0" y="1413.4" font-size="59" font-weight="bold" fill="#0b9edc" textLength="373.6" lengthAdjust="spacingAndGlyphs">Slave Server</text>
<rect x="80" y="1441.3" width="2196.5" height="1593.2" rx="14" fill="#fff"/>
<rect x="82" y="1443.3" width="2192.5" height="1589.2" rx="12" fill="none" stroke="#7b8fa9" stroke-width="4" stroke-dasharray="8.007 8.007"/>
<rect x="2580.5" y="1441.3" width="2196.5" height="1593.2" rx="14" fill="#fff"/>
<rect x="2582.5" y="1443.3" width="2192.5" height="1589.2" rx="12" fill="none" stroke="#7b8fa9" stroke-width="4" stroke-dasharray="8.007 8.007"/>
<polygon points="352.0,1260.0 344.8,1272.5 359.2,1272.5" fill="#7b8fa9"/>
<polygon points="352.0,1551.2 344.8,1538.7 359.2,1538.7" fill="#7b8fa9"/>
<path d="M352 1282.5V1534.7" fill="none" stroke="#7b8fa9" stroke-width="3" stroke-dasharray="12.7 14.2"/>
<polygon points="1492.7,1260.0 1485.5,1272.5 1500.0,1272.5" fill="#7b8fa9"/>
<polygon points="1492.7,1551.2 1485.5,1538.7 1500.0,1538.7" fill="#7b8fa9"/>
<path d="M1492.7 1282.5V1534.7" fill="none" stroke="#7b8fa9" stroke-width="3" stroke-dasharray="12.7 14.2"/>
<polygon points="2817.7,1260.0 2810.4,1272.5 2824.9,1272.5" fill="#7b8fa9"/>
<polygon points="2817.7,1551.2 2810.4,1538.7 2824.9,1538.7" fill="#7b8fa9"/>
<path d="M2817.7 1282.5V1534.7" fill="none" stroke="#7b8fa9" stroke-width="3" stroke-dasharray="12.7 14.2"/>
<polygon points="3958.5,1260.0 3951.2,1272.5 3965.8,1272.5" fill="#7b8fa9"/>
<polygon points="3958.5,1551.2 3951.2,1538.7 3965.8,1538.7" fill="#7b8fa9"/>
<path d="M3958.5 1282.5V1534.7" fill="none" stroke="#7b8fa9" stroke-width="3" stroke-dasharray="12.7 14.2"/>
<path d="M389.3 1534V1503.4Q389.3 1491.4 401.3 1491.4H1445Q1457 1491.4 1457 1503.4V1534" fill="none" stroke="#7b8fa9" stroke-width="3" stroke-dasharray="12.7 14.2"/>
<polygon points="389.3,1551.2 382.1,1538.7 396.6,1538.7" fill="#7b8fa9"/>
<polygon points="1457.0,1551.2 1449.8,1538.7 1464.2,1538.7" fill="#7b8fa9"/>
<path d="M2855 1534V1503.4Q2855 1491.4 2867 1491.4H3911Q3923 1491.4 3923 1503.4V1534" fill="none" stroke="#b5becc" stroke-width="2.5" stroke-dasharray="12.7 14.2"/>
<polygon points="2855.0,1551.2 2847.8,1538.7 2862.2,1538.7" fill="#b5becc"/>
<polygon points="3923.0,1551.2 3915.8,1538.7 3930.2,1538.7" fill="#b5becc"/>
<rect x="128.2" y="1554.3" width="473.0" height="494.2" rx="13.5" fill="#e1f3fe"/>
<rect x="129.7" y="1555.8" width="470.0" height="491.2" rx="12" fill="none" stroke="#0b9bd7" stroke-width="3" stroke-dasharray="5.497 5.497"/>
<g transform="translate(298.2,1592.8) scale(1)"><path d="M82.4 0L124.5 22.4L124.5 180.5L41.2 224.7L0 201.6L0 44.7Z" fill="url(#bg)"/><path d="M0 44.7L41.2 66.9L124.5 22.4M41.2 66.9L41.2 224.7" fill="none" stroke="#fff" stroke-width="4" stroke-linecap="square"/><path d="M11.8 99L27 107.8M11.8 114.8L27 123.6" stroke="#fff" stroke-width="3.2"/></g>
<text x="177.5" y="1881.9" font-size="48" font-weight="bold" fill="#0f4f86" textLength="366.7" lengthAdjust="spacingAndGlyphs">Analytic Server</text>
<text x="272.0" y="1965.9" font-size="36" font-weight="bold" fill="#111c2b" textLength="177.0" lengthAdjust="spacingAndGlyphs">Reporting</text>
<text x="299.7" y="2011.2" font-size="36" font-weight="bold" fill="#111c2b" textLength="122.0" lengthAdjust="spacingAndGlyphs">Engine</text>
<rect x="647.5" y="1554.3" width="473.0" height="494.2" rx="13.5" fill="#e1f3fe"/>
<rect x="649" y="1555.8" width="470.0" height="491.2" rx="12" fill="none" stroke="#0b9bd7" stroke-width="3" stroke-dasharray="5.497 5.497"/>
<g transform="translate(818.0,1592.8) scale(1)"><path d="M82.4 0L124.5 22.4L124.5 180.5L41.2 224.7L0 201.6L0 44.7Z" fill="url(#bg)"/><path d="M0 44.7L41.2 66.9L124.5 22.4M41.2 66.9L41.2 224.7" fill="none" stroke="#fff" stroke-width="4" stroke-linecap="square"/><path d="M11.8 99L27 107.8M11.8 114.8L27 123.6" stroke="#fff" stroke-width="3.2"/></g>
<text x="755.0" y="1881.9" font-size="48" font-weight="bold" fill="#0f4f86" textLength="239.0" lengthAdjust="spacingAndGlyphs">Agentless</text>
<text x="674.3" y="1943.6" font-size="48" font-weight="bold" fill="#0f4f86" textLength="413.0" lengthAdjust="spacingAndGlyphs">Discovery Engine</text>
<text x="792.8" y="2011.2" font-size="36" font-weight="bold" fill="#111c2b" textLength="175.5" lengthAdjust="spacingAndGlyphs">Go Binary</text>
<rect x="1241.5" y="1554.3" width="473.0" height="736.9" rx="13.5" fill="#e1f3fe"/>
<rect x="1243" y="1555.8" width="470.0" height="733.9" rx="12" fill="none" stroke="#0b9bd7" stroke-width="3" stroke-dasharray="5.500 5.500"/>
<path d="M1243 2060H1713" stroke="#0b9bd7" stroke-width="3" stroke-dasharray="5.5 5.5"/>
<g transform="translate(1415.5,1592.8) scale(1)"><path d="M82.4 0L124.5 22.4L124.5 180.5L41.2 224.7L0 201.6L0 44.7Z" fill="url(#bg)"/><path d="M0 44.7L41.2 66.9L124.5 22.4M41.2 66.9L41.2 224.7" fill="none" stroke="#fff" stroke-width="4" stroke-linecap="square"/><path d="M11.8 99L27 107.8M11.8 114.8L27 123.6" stroke="#fff" stroke-width="3.2"/></g>
<text x="1341.3" y="1881.9" font-size="48" font-weight="bold" fill="#0f4f86" textLength="273.0" lengthAdjust="spacingAndGlyphs">ServiceOps</text>
<text x="1335.0" y="1944.0" font-size="48" font-weight="bold" fill="#0f4f86" textLength="285.6" lengthAdjust="spacingAndGlyphs">Main Server</text>
<text x="1269.9" y="2011.2" font-size="36" font-weight="bold" fill="#111c2b" textLength="415.8" lengthAdjust="spacingAndGlyphs">Apache Tomcat Server</text>
<g transform="translate(1280.4,2120.5)"><path d="M2.5 17.5V98.5A49.9 14.85 0 0 0 102.3 98.5V17.5Z" fill="url(#dbb)" stroke="#fff" stroke-width="5"/><path d="M2.5 58.5A49.9 14.85 0 0 0 102.3 58.5" fill="none" stroke="#fff" stroke-width="5.6"/><ellipse cx="52.4" cy="17.5" rx="49.9" ry="14.85" fill="url(#dbt)" stroke="#fff" stroke-width="5"/></g>
<g transform="translate(1359.0,2197.0)"><rect x="0" y="9.5" width="52" height="44.5" rx="12" fill="#fff"/><path d="M10 10Q10 0 20 0H45L62.5 17.5V34Q62.5 44 52.5 44H10Z" fill="#fff"/><rect x="6.9" y="16.2" width="38" height="30.7" rx="7.5" fill="#e8f5fd" stroke="url(#bg)" stroke-width="5"/><path d="M24.4 6.7H43L55.5 19.2V29.3Q55.5 36.8 48 36.8H24.4Q16.9 36.8 16.9 29.3V14.2Q16.9 6.7 24.4 6.7Z" fill="#eef8fe" stroke="url(#bg)" stroke-width="5" stroke-linejoin="round"/><path d="M43 6.7V15.7Q43 19.2 46.5 19.2H55.5" fill="none" stroke="url(#bg)" stroke-width="3.6" stroke-linejoin="round"/></g>
<text x="1441.2" y="2163.7" font-size="48" font-weight="bold" fill="#0f4f86" textLength="78.5" lengthAdjust="spacingAndGlyphs">File</text>
<text x="1441.2" y="2225.5" font-size="48" font-weight="bold" fill="#0f4f86" textLength="236.0" lengthAdjust="spacingAndGlyphs">Database</text>
<rect x="1835.0" y="1554.3" width="394.0" height="327.2" rx="13.5" fill="#e1f3fe"/>
<rect x="1836.5" y="1555.8" width="391.0" height="324.2" rx="12" fill="none" stroke="#0b9bd7" stroke-width="3" stroke-dasharray="5.507 5.507"/>
<g transform="translate(1979.5,1595.9)"><path d="M2.5 17.5V98.5A49.9 14.85 0 0 0 102.3 98.5V17.5Z" fill="url(#dbb)" stroke="#fff" stroke-width="5"/><path d="M2.5 58.5A49.9 14.85 0 0 0 102.3 58.5" fill="none" stroke="#fff" stroke-width="5.6"/><ellipse cx="52.4" cy="17.5" rx="49.9" ry="14.85" fill="url(#dbt)" stroke="#fff" stroke-width="5"/></g>
<text x="1914.6" y="1772.0" font-size="48" font-weight="bold" fill="#0f4f86" textLength="235.8" lengthAdjust="spacingAndGlyphs">Database</text>
<text x="1896.3" y="1834.0" font-size="48" font-weight="bold" fill="#0f4f86" textLength="272.0" lengthAdjust="spacingAndGlyphs">PostgreSQL</text>
<rect x="1835.0" y="1913.0" width="394.0" height="378.2" rx="13.5" fill="#e1f3fe"/>
<rect x="1836.5" y="1914.5" width="391.0" height="375.2" rx="12" fill="none" stroke="#0b9bd7" stroke-width="3" stroke-dasharray="5.518 5.518"/>
<g transform="translate(1979.0,1960.0)"><path d="M7.5 29.4C13 12 31 0 50.5 0C69 0 86 9 97 21.5C90 26.5 80 29.4 70 29.4Z" fill="#f2bc2f"/><path d="M7.5 29.4C11 18 20 8 32 3.5L44.5 29.4Z" fill="#ee9d3a"/><path d="M16.2 37.8H48.5V67.2H16.2A14.7 14.7 0 0 1 16.2 37.8Z" fill="#131d2a"/><path d="M48.5 37.8H71.8A14.7 14.7 0 0 1 71.8 67.2H48.5Z" fill="#1ea2e0"/><path d="M7.5 75.6H70C80 75.6 90 78.5 97 83.5C86 96 69 105 50.5 105C31 105 13 93 7.5 75.6Z" fill="#3cc0a8"/><path d="M7.5 75.6H44.5L32 101.5C20 97 11 87 7.5 75.6Z" fill="#24a088"/></g>
<text x="1935.5" y="2129.7" font-size="48" font-weight="bold" fill="#0f4f86" textLength="194.0" lengthAdjust="spacingAndGlyphs">Full Text</text>
<text x="1860.0" y="2191.0" font-size="48" font-weight="bold" fill="#0f4f86" textLength="344.3" lengthAdjust="spacingAndGlyphs">Search Engine</text>
<text x="1891.4" y="2254.0" font-size="39" font-weight="bold" fill="#111c2b" textLength="281.4" lengthAdjust="spacingAndGlyphs">Elastic Search</text>
<rect x="130" y="2259" width="623.7" height="201.0" rx="14" fill="#fff"/>
<rect x="132" y="2261" width="619.7" height="197.0" rx="12" fill="none" stroke="#7b8fa9" stroke-width="4" stroke-dasharray="7.984 7.984"/>
<rect x="130" y="2522.3" width="623.7" height="201.0" rx="14" fill="#fff"/>
<rect x="132" y="2524.3" width="619.7" height="197.0" rx="12" fill="none" stroke="#7b8fa9" stroke-width="4" stroke-dasharray="7.984 7.984"/>
<rect x="130" y="2785.6" width="623.7" height="201.0" rx="14" fill="#fff"/>
<rect x="132" y="2787.6" width="619.7" height="197.0" rx="12" fill="none" stroke="#7b8fa9" stroke-width="4" stroke-dasharray="7.984 7.984"/>
<g transform="translate(176.8,2296.8)"><path d="M3 0H117.2Q120.2 0 120.2 3V34.2Q120.2 37.2 117.2 37.2H3Q0 37.2 0 34.2V3Q0 0 3 0Z" fill="url(#emg)"/><path d="M3 46.4H117.2Q120.2 46.4 120.2 49.4V57.5H84Q64 57.5 64 77.5V83.4H3Q0 83.4 0 80.4V49.4Q0 46.4 3 46.4Z" fill="url(#emg)"/><rect x="16.2" y="89.9" width="15.3" height="22.8" fill="url(#emg)"/><g fill="#fff"><rect x="11.4" y="10.4" width="7.1" height="16.9"/><rect x="29.9" y="10.4" width="7.1" height="16.9"/><rect x="48.4" y="10.4" width="7.1" height="16.9"/><circle cx="97.4" cy="18.8" r="8.1"/><rect x="11.4" y="56.2" width="7.1" height="16.9"/><rect x="29.9" y="56.2" width="7.1" height="16.9"/></g><rect x="76" y="70.2" width="70.4" height="47" rx="4" fill="#fff" stroke="#33363a" stroke-width="4"/><path d="M78 72.5L111.2 99L144.4 72.5M78 115L103 92M144.4 115L119.4 92" fill="none" stroke="#33363a" stroke-width="3.6"/></g>
<text x="369.0" y="2344.9" font-size="48" font-weight="bold" fill="#111c2b" textLength="299.6" lengthAdjust="spacingAndGlyphs">Email Server</text>
<text x="370.0" y="2397.5" font-size="33.5" font-weight="bold" fill="#111c2b" textLength="215.0" lengthAdjust="spacingAndGlyphs">(Notification)</text>
<g transform="translate(176.8,2573.7)"><path d="M60.1 2L118 98.5Q119 100.8 116.5 100.8H3.7Q1.2 100.8 2.2 98.5Z" fill="#fff" stroke="#3e4043" stroke-width="2.6" stroke-linejoin="round"/><path d="M60.1 31V62L38 83M60.1 62L83 83" fill="none" stroke="#3e4043" stroke-width="4.2"/><circle cx="60.1" cy="30.5" r="8.6" fill="#6a6b6e"/><circle cx="60.1" cy="62" r="8.8" fill="#4a4b4e"/><circle cx="37.6" cy="83.5" r="8.6" fill="#35373a"/><circle cx="83" cy="83.5" r="8.6" fill="#35373a"/></g>
<text x="328.7" y="2609.4" font-size="48" font-weight="bold" fill="#111c2b" textLength="385.4" lengthAdjust="spacingAndGlyphs">Active Directory</text>
<text x="331.7" y="2671.8" font-size="48" font-weight="bold" fill="#111c2b" textLength="157.7" lengthAdjust="spacingAndGlyphs">(LDAP)</text>
<g transform="translate(378.6,2883.2)"><circle r="59.5" fill="url(#dng)"/><circle r="51.5" fill="none" stroke="#fff" stroke-width="5.2"/><g fill="none" stroke="#fff" stroke-width="5.2"><ellipse rx="23" ry="51.5"/><path d="M-44 -27Q0 -12 44 -27"/><path d="M-44 27Q0 12 44 27"/><path d="M-51.5 0H-40M40 0H51.5"/></g><rect x="-40" y="-17" width="80" height="34" fill="url(#dng)"/><text x="-37.5" y="14.5" font-size="41" font-weight="bold" fill="#fff" textLength="75" lengthAdjust="spacingAndGlyphs" font-family="DejaVu Sans, Liberation Sans, sans-serif">DNS</text></g>
<text x="473.2" y="2902.7" font-size="48" font-weight="bold" fill="#111c2b" textLength="94.0" lengthAdjust="spacingAndGlyphs">DNS</text>
<rect x="978" y="2404.8" width="1250.7" height="582.7" rx="14" fill="#fff"/>
<rect x="980" y="2406.8" width="1246.7" height="578.7" rx="12" fill="none" stroke="#7b8fa9" stroke-width="4" stroke-dasharray="7.996 7.996"/>
<path d="M980 2643.2H2226.7" stroke="#7b8fa9" stroke-width="4" stroke-dasharray="8 8"/>
<rect x="1026.1" y="2452.5" width="1154.4" height="139.8" rx="13.5" fill="#e1f3fe"/>
<rect x="1027.6" y="2454" width="1151.4" height="136.8" rx="12" fill="none" stroke="#0b9bd7" stroke-width="3" stroke-dasharray="5.508 5.508"/>
<g transform="translate(1068.0,2486.5)"><g fill="none" stroke="url(#agg)" stroke-width="6.6"><rect x="3.3" y="3.3" width="69.4" height="13.9" rx="0.5"/><rect x="3.3" y="27.5" width="69.4" height="13.2"/><rect x="3.3" y="50.6" width="69.4" height="13.6"/></g><g transform="translate(64,48.4)"><circle r="31" fill="#e1f3fe"/></g><path transform="translate(64,48.4)" d="M15.09 1.84L20.47 5.53L15.02 14.96L9.13 12.15L5.95 13.99L5.44 20.49L-5.44 20.49L-5.95 13.99L-9.13 12.15L-15.02 14.96L-20.47 5.53L-15.09 1.84L-15.09 -1.84L-20.47 -5.53L-15.02 -14.96L-9.13 -12.15L-5.95 -13.99L-5.44 -20.49L5.44 -20.49L5.95 -13.99L9.13 -12.15L15.02 -14.96L20.47 -5.53L15.09 -1.84Z" fill="none" stroke="url(#agg)" stroke-width="6" stroke-linejoin="round"/><circle cx="64" cy="48.4" r="6.4" fill="none" stroke="url(#agg)" stroke-width="4.4"/></g>
<text x="1171.9" y="2539.5" font-size="48" font-weight="bold" fill="#0f4f86" textLength="169.0" lengthAdjust="spacingAndGlyphs">Agents</text>
<text x="1502.2" y="2539.5" font-size="48" font-weight="bold" fill="#0f4f86" textLength="646.0" lengthAdjust="spacingAndGlyphs">For Agent Based Discovery</text>
<text x="1303.2" y="2724.3" font-size="48" font-weight="bold" fill="#111c2b" textLength="600.0" lengthAdjust="spacingAndGlyphs">IT Network Infrastructure</text>
<g transform="translate(1013.3,2809.1)"><rect x="18.1" y="0" width="153" height="104" rx="5" fill="#33363b"/><rect x="21.8" y="7.5" width="145.3" height="90.4" fill="#fff"/><path d="M0 103.3H189.5V105.5Q189.5 109.1 180 109.1H9.5Q0 109.1 0 105.5Z" fill="#8b96a6"/><rect x="0" y="103.3" width="189.5" height="1.6" fill="#5b6470"/><rect x="80" y="103.3" width="29.5" height="2.2" rx="1" fill="#5f6975"/><circle cx="94.7" cy="3.8" r="0.9" fill="#777"/></g>
<g transform="translate(1313.2,2790.0)"><path d="M6 0H65.3Q71.3 0 71.3 6V148.2H0V6Q0 0 6 0Z" fill="url(#gg)"/><g fill="#fff"><rect x="10.6" y="21.2" width="50.1" height="8"/><circle cx="35.7" cy="92" r="11.2"/><rect x="10.6" y="111.7" width="50.1" height="8"/><rect x="10.6" y="126.4" width="50.1" height="7.6"/></g></g>
<g transform="translate(1495.0,2815.8)"><rect x="0.0" y="0.0" width="13.3" height="16.0" fill="#77787b"/><rect x="19.4" y="0.0" width="51.6" height="16.0" fill="#77787b"/><rect x="77.2" y="0.0" width="12.8" height="16.0" fill="#77787b"/><rect x="0.0" y="22.9" width="41.8" height="19.2" fill="#5f6063"/><rect x="47.9" y="22.9" width="31.9" height="19.2" fill="#5f6063"/><rect x="0.0" y="48.2" width="13.3" height="19.2" fill="#4a4b4e"/><rect x="19.4" y="48.2" width="41.8" height="19.2" fill="#4a4b4e"/><rect x="0.0" y="74.0" width="41.8" height="16.0" fill="#35383c"/><rect x="47.9" y="74.0" width="16.0" height="16.0" fill="#35383c"/><path d="M83.8 25.5C96 37 122.5 45 122.5 66A32 32 0 0 1 58.5 66C58.5 48 76 42 83.8 25.5Z" fill="#fff" stroke="#fff" stroke-width="9" stroke-linejoin="round"/><path d="M83.8 25.5C90 33 97 37 100 42L103.5 33C112 42 122.5 50 122.5 66A32 32 0 0 1 58.5 66C58.5 48 76 42 83.8 25.5Z" fill="url(#gg)"/><path d="M90.5 52C95 58 99 60 100 66L106.5 58C109 62 110 66 109.5 70A16.5 16.5 0 0 1 76.5 70C76.5 60 86 58 90.5 52Z" fill="#fff"/></g>
<g transform="translate(1728.1,2832.4)"><path d="M29.2 0H161.6L191.5 33H0Z" fill="#4b4b4d"/><rect x="0" y="33" width="191.5" height="30.3" fill="#3b3b3d"/><path d="M31.2 4.5H41.2M150.3 4.5H160.3" stroke="#2c2d30" stroke-width="1.3"/><path d="M28.3 7.8H38.3M153.2 7.8H163.2" stroke="#2c2d30" stroke-width="1.3"/><path d="M25.4 11.1H35.4M156.1 11.1H166.1" stroke="#2c2d30" stroke-width="1.3"/><path d="M22.5 14.4H32.5M159.0 14.4H169.0" stroke="#2c2d30" stroke-width="1.3"/><path d="M19.5 17.7H29.5M162.0 17.7H172.0" stroke="#2c2d30" stroke-width="1.3"/><path d="M16.6 21.0H26.6M164.9 21.0H174.9" stroke="#2c2d30" stroke-width="1.3"/><path d="M13.7 24.3H23.7M167.8 24.3H177.8" stroke="#2c2d30" stroke-width="1.3"/><path d="M10.8 27.6H20.8M170.7 27.6H180.7" stroke="#2c2d30" stroke-width="1.3"/><rect x="6.2" y="38.6" width="6.6" height="9.2" fill="#26292e"/><rect x="7.9" y="40" width="3.2" height="6.4" fill="#f6b32c"/><rect x="8.2" y="51" width="2.8" height="2.8" fill="#8d8f93"/><rect x="15.6" y="38.6" width="6.6" height="9.2" fill="#26292e"/><rect x="17.3" y="40" width="3.2" height="6.4" fill="#f6b32c"/><rect x="17.6" y="51" width="2.8" height="2.8" fill="#8d8f93"/><rect x="25.1" y="38.6" width="6.6" height="9.2" fill="#26292e"/><rect x="26.8" y="40" width="3.2" height="6.4" fill="#f6b32c"/><rect x="27.1" y="51" width="2.8" height="2.8" fill="#8d8f93"/><rect x="34.5" y="38.6" width="6.6" height="9.2" fill="#26292e"/><rect x="36.2" y="40" width="3.2" height="6.4" fill="#f6b32c"/><rect x="36.5" y="51" width="2.8" height="2.8" fill="#8d8f93"/><rect x="44.0" y="38.6" width="6.6" height="9.2" fill="#26292e"/><rect x="45.7" y="40" width="3.2" height="6.4" fill="#f6b32c"/><rect x="46.0" y="51" width="2.8" height="2.8" fill="#8d8f93"/><rect x="53.5" y="38.6" width="6.6" height="9.2" fill="#26292e"/><rect x="55.2" y="40" width="3.2" height="6.4" fill="#2a2d33"/><rect x="55.5" y="51" width="2.8" height="2.8" fill="#8d8f93"/><rect x="62.9" y="38.6" width="6.6" height="9.2" fill="#26292e"/><rect x="64.6" y="40" width="3.2" height="6.4" fill="#f6b32c"/><rect x="64.9" y="51" width="2.8" height="2.8" fill="#8d8f93"/><rect x="72.3" y="38.6" width="6.6" height="9.2" fill="#26292e"/><rect x="74.0" y="40" width="3.2" height="6.4" fill="#2a2d33"/><rect x="74.3" y="51" width="2.8" height="2.8" fill="#8d8f93"/><rect x="81.8" y="38.6" width="6.6" height="9.2" fill="#26292e"/><rect x="83.5" y="40" width="3.2" height="6.4" fill="#f6b32c"/><rect x="83.8" y="51" width="2.8" height="2.8" fill="#8d8f93"/><rect x="91.2" y="38.6" width="6.6" height="9.2" fill="#26292e"/><rect x="93.0" y="40" width="3.2" height="6.4" fill="#f6b32c"/><rect x="93.2" y="51" width="2.8" height="2.8" fill="#8d8f93"/><rect x="100.7" y="38.6" width="6.6" height="9.2" fill="#26292e"/><rect x="102.4" y="40" width="3.2" height="6.4" fill="#f6b32c"/><rect x="102.7" y="51" width="2.8" height="2.8" fill="#8d8f93"/><rect x="110.1" y="38.6" width="6.6" height="9.2" fill="#26292e"/><rect x="111.8" y="40" width="3.2" height="6.4" fill="#f6b32c"/><rect x="112.1" y="51" width="2.8" height="2.8" fill="#8d8f93"/><rect x="119.6" y="38.6" width="6.6" height="9.2" fill="#26292e"/><rect x="121.3" y="40" width="3.2" height="6.4" fill="#2a2d33"/><rect x="121.6" y="51" width="2.8" height="2.8" fill="#8d8f93"/><rect x="129.0" y="38.6" width="6.6" height="9.2" fill="#26292e"/><rect x="130.7" y="40" width="3.2" height="6.4" fill="#2a2d33"/><rect x="131.0" y="51" width="2.8" height="2.8" fill="#8d8f93"/><rect x="138.5" y="38.6" width="6.6" height="9.2" fill="#26292e"/><rect x="140.2" y="40" width="3.2" height="6.4" fill="#f6b32c"/><rect x="140.5" y="51" width="2.8" height="2.8" fill="#8d8f93"/><rect x="147.9" y="38.6" width="6.6" height="9.2" fill="#26292e"/><rect x="149.6" y="40" width="3.2" height="6.4" fill="#f6b32c"/><rect x="149.9" y="51" width="2.8" height="2.8" fill="#8d8f93"/></g>
<g transform="translate(2030.0,2804.4)"><rect x="40.7" y="2.5" width="63.1" height="50" rx="6" fill="#fff" stroke="#6f7073" stroke-width="5"/><path d="M14 45.3H128Q142 45.3 142 59.3V96.3H0V59.3Q0 45.3 14 45.3Z" fill="url(#gg)"/><circle cx="14.7" cy="59.5" r="4.6" fill="#fff"/><path d="M40.7 86.8H103.8V109.4Q103.8 116.9 96.3 116.9H48.2Q40.7 116.9 40.7 109.4Z" fill="#fff" stroke="#33363a" stroke-width="5"/><path d="M55 94.7H89.2M55 104.1H89.2" stroke="#33363a" stroke-width="3.6"/></g>
<rect x="2630.5" y="1554.3" width="394.0" height="327.2" rx="13.5" fill="#e1f3fe"/>
<rect x="2632.0" y="1555.8" width="391.0" height="324.2" rx="12" fill="none" stroke="#0b9bd7" stroke-width="3" stroke-dasharray="5.507 5.507"/>
<g transform="translate(2775.0,1595.9)"><path d="M2.5 17.5V98.5A49.9 14.85 0 0 0 102.3 98.5V17.5Z" fill="url(#dbb)" stroke="#fff" stroke-width="5"/><path d="M2.5 58.5A49.9 14.85 0 0 0 102.3 58.5" fill="none" stroke="#fff" stroke-width="5.6"/><ellipse cx="52.4" cy="17.5" rx="49.9" ry="14.85" fill="url(#dbt)" stroke="#fff" stroke-width="5"/></g>
<text x="2710.1" y="1772.0" font-size="48" font-weight="bold" fill="#0f4f86" textLength="235.8" lengthAdjust="spacingAndGlyphs">Database</text>
<text x="2691.8" y="1834.0" font-size="48" font-weight="bold" fill="#0f4f86" textLength="272.0" lengthAdjust="spacingAndGlyphs">PostgreSQL</text>
<rect x="2630.5" y="1913.0" width="394.0" height="378.2" rx="13.5" fill="#e1f3fe"/>
<rect x="2632.0" y="1914.5" width="391.0" height="375.2" rx="12" fill="none" stroke="#0b9bd7" stroke-width="3" stroke-dasharray="5.518 5.518"/>
<g transform="translate(2774.5,1960.0)"><path d="M7.5 29.4C13 12 31 0 50.5 0C69 0 86 9 97 21.5C90 26.5 80 29.4 70 29.4Z" fill="#f2bc2f"/><path d="M7.5 29.4C11 18 20 8 32 3.5L44.5 29.4Z" fill="#ee9d3a"/><path d="M16.2 37.8H48.5V67.2H16.2A14.7 14.7 0 0 1 16.2 37.8Z" fill="#131d2a"/><path d="M48.5 37.8H71.8A14.7 14.7 0 0 1 71.8 67.2H48.5Z" fill="#1ea2e0"/><path d="M7.5 75.6H70C80 75.6 90 78.5 97 83.5C86 96 69 105 50.5 105C31 105 13 93 7.5 75.6Z" fill="#3cc0a8"/><path d="M7.5 75.6H44.5L32 101.5C20 97 11 87 7.5 75.6Z" fill="#24a088"/></g>
<text x="2731.0" y="2129.7" font-size="48" font-weight="bold" fill="#0f4f86" textLength="194.0" lengthAdjust="spacingAndGlyphs">Full Text</text>
<text x="2655.5" y="2191.0" font-size="48" font-weight="bold" fill="#0f4f86" textLength="344.3" lengthAdjust="spacingAndGlyphs">Search Engine</text>
<text x="2686.9" y="2254.0" font-size="39" font-weight="bold" fill="#111c2b" textLength="281.4" lengthAdjust="spacingAndGlyphs">Elastic Search</text>
<rect x="3144.0" y="1554.3" width="473.0" height="736.9" rx="13.5" fill="#e1f3fe"/>
<rect x="3145.5" y="1555.8" width="470.0" height="733.9" rx="12" fill="none" stroke="#0b9bd7" stroke-width="3" stroke-dasharray="5.500 5.500"/>
<path d="M3145.5 2060H3615.5" stroke="#0b9bd7" stroke-width="3" stroke-dasharray="5.5 5.5"/>
<g transform="translate(3318.0,1592.8) scale(1)"><path d="M82.4 0L124.5 22.4L124.5 180.5L41.2 224.7L0 201.6L0 44.7Z" fill="url(#bg)"/><path d="M0 44.7L41.2 66.9L124.5 22.4M41.2 66.9L41.2 224.7" fill="none" stroke="#fff" stroke-width="4" stroke-linecap="square"/><path d="M11.8 99L27 107.8M11.8 114.8L27 123.6" stroke="#fff" stroke-width="3.2"/></g>
<text x="3243.8" y="1881.9" font-size="48" font-weight="bold" fill="#0f4f86" textLength="273.0" lengthAdjust="spacingAndGlyphs">ServiceOps</text>
<text x="3237.5" y="1944.0" font-size="48" font-weight="bold" fill="#0f4f86" textLength="285.6" lengthAdjust="spacingAndGlyphs">Main Server</text>
<text x="3172.4" y="2011.2" font-size="36" font-weight="bold" fill="#111c2b" textLength="415.8" lengthAdjust="spacingAndGlyphs">Apache Tomcat Server</text>
<g transform="translate(3182.9,2120.5)"><path d="M2.5 17.5V98.5A49.9 14.85 0 0 0 102.3 98.5V17.5Z" fill="url(#dbb)" stroke="#fff" stroke-width="5"/><path d="M2.5 58.5A49.9 14.85 0 0 0 102.3 58.5" fill="none" stroke="#fff" stroke-width="5.6"/><ellipse cx="52.4" cy="17.5" rx="49.9" ry="14.85" fill="url(#dbt)" stroke="#fff" stroke-width="5"/></g>
<g transform="translate(3261.5,2197.0)"><rect x="0" y="9.5" width="52" height="44.5" rx="12" fill="#fff"/><path d="M10 10Q10 0 20 0H45L62.5 17.5V34Q62.5 44 52.5 44H10Z" fill="#fff"/><rect x="6.9" y="16.2" width="38" height="30.7" rx="7.5" fill="#e8f5fd" stroke="url(#bg)" stroke-width="5"/><path d="M24.4 6.7H43L55.5 19.2V29.3Q55.5 36.8 48 36.8H24.4Q16.9 36.8 16.9 29.3V14.2Q16.9 6.7 24.4 6.7Z" fill="#eef8fe" stroke="url(#bg)" stroke-width="5" stroke-linejoin="round"/><path d="M43 6.7V15.7Q43 19.2 46.5 19.2H55.5" fill="none" stroke="url(#bg)" stroke-width="3.6" stroke-linejoin="round"/></g>
<text x="3343.7" y="2163.7" font-size="48" font-weight="bold" fill="#0f4f86" textLength="78.5" lengthAdjust="spacingAndGlyphs">File</text>
<text x="3343.7" y="2225.5" font-size="48" font-weight="bold" fill="#0f4f86" textLength="236.0" lengthAdjust="spacingAndGlyphs">Database</text>
<rect x="3736.5" y="1554.3" width="473.0" height="494.2" rx="13.5" fill="#e1f3fe"/>
<rect x="3738" y="1555.8" width="470.0" height="491.2" rx="12" fill="none" stroke="#0b9bd7" stroke-width="3" stroke-dasharray="5.497 5.497"/>
<g transform="translate(3907.0,1592.8) scale(1)"><path d="M82.4 0L124.5 22.4L124.5 180.5L41.2 224.7L0 201.6L0 44.7Z" fill="url(#bg)"/><path d="M0 44.7L41.2 66.9L124.5 22.4M41.2 66.9L41.2 224.7" fill="none" stroke="#fff" stroke-width="4" stroke-linecap="square"/><path d="M11.8 99L27 107.8M11.8 114.8L27 123.6" stroke="#fff" stroke-width="3.2"/></g>
<text x="3844.0" y="1881.9" font-size="48" font-weight="bold" fill="#0f4f86" textLength="239.0" lengthAdjust="spacingAndGlyphs">Agentless</text>
<text x="3763.3" y="1943.6" font-size="48" font-weight="bold" fill="#0f4f86" textLength="413.0" lengthAdjust="spacingAndGlyphs">Discovery Engine</text>
<text x="3881.8" y="2011.2" font-size="36" font-weight="bold" fill="#111c2b" textLength="175.5" lengthAdjust="spacingAndGlyphs">Go Binary</text>
<rect x="4256.5" y="1554.3" width="473.0" height="494.2" rx="13.5" fill="#e1f3fe"/>
<rect x="4258.0" y="1555.8" width="470.0" height="491.2" rx="12" fill="none" stroke="#0b9bd7" stroke-width="3" stroke-dasharray="5.497 5.497"/>
<g transform="translate(4426.5,1592.8) scale(1)"><path d="M82.4 0L124.5 22.4L124.5 180.5L41.2 224.7L0 201.6L0 44.7Z" fill="url(#bg)"/><path d="M0 44.7L41.2 66.9L124.5 22.4M41.2 66.9L41.2 224.7" fill="none" stroke="#fff" stroke-width="4" stroke-linecap="square"/><path d="M11.8 99L27 107.8M11.8 114.8L27 123.6" stroke="#fff" stroke-width="3.2"/></g>
<text x="4305.8" y="1881.9" font-size="48" font-weight="bold" fill="#0f4f86" textLength="366.7" lengthAdjust="spacingAndGlyphs">Analytic Server</text>
<text x="4400.3" y="1965.9" font-size="36" font-weight="bold" fill="#111c2b" textLength="177.0" lengthAdjust="spacingAndGlyphs">Reporting</text>
<text x="4428.0" y="2011.2" font-size="36" font-weight="bold" fill="#111c2b" textLength="122.0" lengthAdjust="spacingAndGlyphs">Engine</text>
<rect x="4105.2" y="2259" width="623.7" height="201.0" rx="14" fill="#fff"/>
<rect x="4107.2" y="2261" width="619.7" height="197.0" rx="12" fill="none" stroke="#7b8fa9" stroke-width="4" stroke-dasharray="7.984 7.984"/>
<rect x="4105.2" y="2522.3" width="623.7" height="201.0" rx="14" fill="#fff"/>
<rect x="4107.2" y="2524.3" width="619.7" height="197.0" rx="12" fill="none" stroke="#7b8fa9" stroke-width="4" stroke-dasharray="7.984 7.984"/>
<rect x="4105.2" y="2785.6" width="623.7" height="201.0" rx="14" fill="#fff"/>
<rect x="4107.2" y="2787.6" width="619.7" height="197.0" rx="12" fill="none" stroke="#7b8fa9" stroke-width="4" stroke-dasharray="7.984 7.984"/>
<g transform="translate(4152.0,2296.8)"><path d="M3 0H117.2Q120.2 0 120.2 3V34.2Q120.2 37.2 117.2 37.2H3Q0 37.2 0 34.2V3Q0 0 3 0Z" fill="url(#emg)"/><path d="M3 46.4H117.2Q120.2 46.4 120.2 49.4V57.5H84Q64 57.5 64 77.5V83.4H3Q0 83.4 0 80.4V49.4Q0 46.4 3 46.4Z" fill="url(#emg)"/><rect x="16.2" y="89.9" width="15.3" height="22.8" fill="url(#emg)"/><g fill="#fff"><rect x="11.4" y="10.4" width="7.1" height="16.9"/><rect x="29.9" y="10.4" width="7.1" height="16.9"/><rect x="48.4" y="10.4" width="7.1" height="16.9"/><circle cx="97.4" cy="18.8" r="8.1"/><rect x="11.4" y="56.2" width="7.1" height="16.9"/><rect x="29.9" y="56.2" width="7.1" height="16.9"/></g><rect x="76" y="70.2" width="70.4" height="47" rx="4" fill="#fff" stroke="#33363a" stroke-width="4"/><path d="M78 72.5L111.2 99L144.4 72.5M78 115L103 92M144.4 115L119.4 92" fill="none" stroke="#33363a" stroke-width="3.6"/></g>
<text x="4344.2" y="2344.9" font-size="48" font-weight="bold" fill="#111c2b" textLength="299.6" lengthAdjust="spacingAndGlyphs">Email Server</text>
<text x="4345.2" y="2397.5" font-size="33.5" font-weight="bold" fill="#111c2b" textLength="215.0" lengthAdjust="spacingAndGlyphs">(Notification)</text>
<g transform="translate(4152.0,2573.7)"><path d="M60.1 2L118 98.5Q119 100.8 116.5 100.8H3.7Q1.2 100.8 2.2 98.5Z" fill="#fff" stroke="#3e4043" stroke-width="2.6" stroke-linejoin="round"/><path d="M60.1 31V62L38 83M60.1 62L83 83" fill="none" stroke="#3e4043" stroke-width="4.2"/><circle cx="60.1" cy="30.5" r="8.6" fill="#6a6b6e"/><circle cx="60.1" cy="62" r="8.8" fill="#4a4b4e"/><circle cx="37.6" cy="83.5" r="8.6" fill="#35373a"/><circle cx="83" cy="83.5" r="8.6" fill="#35373a"/></g>
<text x="4303.9" y="2609.4" font-size="48" font-weight="bold" fill="#111c2b" textLength="385.4" lengthAdjust="spacingAndGlyphs">Active Directory</text>
<text x="4306.9" y="2671.8" font-size="48" font-weight="bold" fill="#111c2b" textLength="157.7" lengthAdjust="spacingAndGlyphs">(LDAP)</text>
<g transform="translate(4353.8,2883.2)"><circle r="59.5" fill="url(#dng)"/><circle r="51.5" fill="none" stroke="#fff" stroke-width="5.2"/><g fill="none" stroke="#fff" stroke-width="5.2"><ellipse rx="23" ry="51.5"/><path d="M-44 -27Q0 -12 44 -27"/><path d="M-44 27Q0 12 44 27"/><path d="M-51.5 0H-40M40 0H51.5"/></g><rect x="-40" y="-17" width="80" height="34" fill="url(#dng)"/><text x="-37.5" y="14.5" font-size="41" font-weight="bold" fill="#fff" textLength="75" lengthAdjust="spacingAndGlyphs" font-family="DejaVu Sans, Liberation Sans, sans-serif">DNS</text></g>
<text x="4448.4" y="2902.7" font-size="48" font-weight="bold" fill="#111c2b" textLength="94.0" lengthAdjust="spacingAndGlyphs">DNS</text>
<rect x="2631" y="2404.8" width="1250.7" height="582.7" rx="14" fill="#fff"/>
<rect x="2633" y="2406.8" width="1246.7" height="578.7" rx="12" fill="none" stroke="#7b8fa9" stroke-width="4" stroke-dasharray="7.996 7.996"/>
<path d="M2633 2643.2H3879.7" stroke="#7b8fa9" stroke-width="4" stroke-dasharray="8 8"/>
<rect x="2679.1" y="2452.5" width="1154.4" height="139.8" rx="13.5" fill="#e1f3fe"/>
<rect x="2680.6" y="2454" width="1151.4" height="136.8" rx="12" fill="none" stroke="#0b9bd7" stroke-width="3" stroke-dasharray="5.508 5.508"/>
<g transform="translate(2721.0,2486.5)"><g fill="none" stroke="url(#agg)" stroke-width="6.6"><rect x="3.3" y="3.3" width="69.4" height="13.9" rx="0.5"/><rect x="3.3" y="27.5" width="69.4" height="13.2"/><rect x="3.3" y="50.6" width="69.4" height="13.6"/></g><g transform="translate(64,48.4)"><circle r="31" fill="#e1f3fe"/></g><path transform="translate(64,48.4)" d="M15.09 1.84L20.47 5.53L15.02 14.96L9.13 12.15L5.95 13.99L5.44 20.49L-5.44 20.49L-5.95 13.99L-9.13 12.15L-15.02 14.96L-20.47 5.53L-15.09 1.84L-15.09 -1.84L-20.47 -5.53L-15.02 -14.96L-9.13 -12.15L-5.95 -13.99L-5.44 -20.49L5.44 -20.49L5.95 -13.99L9.13 -12.15L15.02 -14.96L20.47 -5.53L15.09 -1.84Z" fill="none" stroke="url(#agg)" stroke-width="6" stroke-linejoin="round"/><circle cx="64" cy="48.4" r="6.4" fill="none" stroke="url(#agg)" stroke-width="4.4"/></g>
<text x="2824.9" y="2539.5" font-size="48" font-weight="bold" fill="#0f4f86" textLength="169.0" lengthAdjust="spacingAndGlyphs">Agents</text>
<text x="3155.2" y="2539.5" font-size="48" font-weight="bold" fill="#0f4f86" textLength="646.0" lengthAdjust="spacingAndGlyphs">For Agent Based Discovery</text>
<text x="2956.2" y="2724.3" font-size="48" font-weight="bold" fill="#111c2b" textLength="600.0" lengthAdjust="spacingAndGlyphs">IT Network Infrastructure</text>
<g transform="translate(2666.3,2809.1)"><rect x="18.1" y="0" width="153" height="104" rx="5" fill="#33363b"/><rect x="21.8" y="7.5" width="145.3" height="90.4" fill="#fff"/><path d="M0 103.3H189.5V105.5Q189.5 109.1 180 109.1H9.5Q0 109.1 0 105.5Z" fill="#8b96a6"/><rect x="0" y="103.3" width="189.5" height="1.6" fill="#5b6470"/><rect x="80" y="103.3" width="29.5" height="2.2" rx="1" fill="#5f6975"/><circle cx="94.7" cy="3.8" r="0.9" fill="#777"/></g>
<g transform="translate(2966.2,2790.0)"><path d="M6 0H65.3Q71.3 0 71.3 6V148.2H0V6Q0 0 6 0Z" fill="url(#gg)"/><g fill="#fff"><rect x="10.6" y="21.2" width="50.1" height="8"/><circle cx="35.7" cy="92" r="11.2"/><rect x="10.6" y="111.7" width="50.1" height="8"/><rect x="10.6" y="126.4" width="50.1" height="7.6"/></g></g>
<g transform="translate(3148.0,2815.8)"><rect x="0.0" y="0.0" width="13.3" height="16.0" fill="#77787b"/><rect x="19.4" y="0.0" width="51.6" height="16.0" fill="#77787b"/><rect x="77.2" y="0.0" width="12.8" height="16.0" fill="#77787b"/><rect x="0.0" y="22.9" width="41.8" height="19.2" fill="#5f6063"/><rect x="47.9" y="22.9" width="31.9" height="19.2" fill="#5f6063"/><rect x="0.0" y="48.2" width="13.3" height="19.2" fill="#4a4b4e"/><rect x="19.4" y="48.2" width="41.8" height="19.2" fill="#4a4b4e"/><rect x="0.0" y="74.0" width="41.8" height="16.0" fill="#35383c"/><rect x="47.9" y="74.0" width="16.0" height="16.0" fill="#35383c"/><path d="M83.8 25.5C96 37 122.5 45 122.5 66A32 32 0 0 1 58.5 66C58.5 48 76 42 83.8 25.5Z" fill="#fff" stroke="#fff" stroke-width="9" stroke-linejoin="round"/><path d="M83.8 25.5C90 33 97 37 100 42L103.5 33C112 42 122.5 50 122.5 66A32 32 0 0 1 58.5 66C58.5 48 76 42 83.8 25.5Z" fill="url(#gg)"/><path d="M90.5 52C95 58 99 60 100 66L106.5 58C109 62 110 66 109.5 70A16.5 16.5 0 0 1 76.5 70C76.5 60 86 58 90.5 52Z" fill="#fff"/></g>
<g transform="translate(3381.1,2832.4)"><path d="M29.2 0H161.6L191.5 33H0Z" fill="#4b4b4d"/><rect x="0" y="33" width="191.5" height="30.3" fill="#3b3b3d"/><path d="M31.2 4.5H41.2M150.3 4.5H160.3" stroke="#2c2d30" stroke-width="1.3"/><path d="M28.3 7.8H38.3M153.2 7.8H163.2" stroke="#2c2d30" stroke-width="1.3"/><path d="M25.4 11.1H35.4M156.1 11.1H166.1" stroke="#2c2d30" stroke-width="1.3"/><path d="M22.5 14.4H32.5M159.0 14.4H169.0" stroke="#2c2d30" stroke-width="1.3"/><path d="M19.5 17.7H29.5M162.0 17.7H172.0" stroke="#2c2d30" stroke-width="1.3"/><path d="M16.6 21.0H26.6M164.9 21.0H174.9" stroke="#2c2d30" stroke-width="1.3"/><path d="M13.7 24.3H23.7M167.8 24.3H177.8" stroke="#2c2d30" stroke-width="1.3"/><path d="M10.8 27.6H20.8M170.7 27.6H180.7" stroke="#2c2d30" stroke-width="1.3"/><rect x="6.2" y="38.6" width="6.6" height="9.2" fill="#26292e"/><rect x="7.9" y="40" width="3.2" height="6.4" fill="#f6b32c"/><rect x="8.2" y="51" width="2.8" height="2.8" fill="#8d8f93"/><rect x="15.6" y="38.6" width="6.6" height="9.2" fill="#26292e"/><rect x="17.3" y="40" width="3.2" height="6.4" fill="#f6b32c"/><rect x="17.6" y="51" width="2.8" height="2.8" fill="#8d8f93"/><rect x="25.1" y="38.6" width="6.6" height="9.2" fill="#26292e"/><rect x="26.8" y="40" width="3.2" height="6.4" fill="#f6b32c"/><rect x="27.1" y="51" width="2.8" height="2.8" fill="#8d8f93"/><rect x="34.5" y="38.6" width="6.6" height="9.2" fill="#26292e"/><rect x="36.2" y="40" width="3.2" height="6.4" fill="#f6b32c"/><rect x="36.5" y="51" width="2.8" height="2.8" fill="#8d8f93"/><rect x="44.0" y="38.6" width="6.6" height="9.2" fill="#26292e"/><rect x="45.7" y="40" width="3.2" height="6.4" fill="#f6b32c"/><rect x="46.0" y="51" width="2.8" height="2.8" fill="#8d8f93"/><rect x="53.5" y="38.6" width="6.6" height="9.2" fill="#26292e"/><rect x="55.2" y="40" width="3.2" height="6.4" fill="#2a2d33"/><rect x="55.5" y="51" width="2.8" height="2.8" fill="#8d8f93"/><rect x="62.9" y="38.6" width="6.6" height="9.2" fill="#26292e"/><rect x="64.6" y="40" width="3.2" height="6.4" fill="#f6b32c"/><rect x="64.9" y="51" width="2.8" height="2.8" fill="#8d8f93"/><rect x="72.3" y="38.6" width="6.6" height="9.2" fill="#26292e"/><rect x="74.0" y="40" width="3.2" height="6.4" fill="#2a2d33"/><rect x="74.3" y="51" width="2.8" height="2.8" fill="#8d8f93"/><rect x="81.8" y="38.6" width="6.6" height="9.2" fill="#26292e"/><rect x="83.5" y="40" width="3.2" height="6.4" fill="#f6b32c"/><rect x="83.8" y="51" width="2.8" height="2.8" fill="#8d8f93"/><rect x="91.2" y="38.6" width="6.6" height="9.2" fill="#26292e"/><rect x="93.0" y="40" width="3.2" height="6.4" fill="#f6b32c"/><rect x="93.2" y="51" width="2.8" height="2.8" fill="#8d8f93"/><rect x="100.7" y="38.6" width="6.6" height="9.2" fill="#26292e"/><rect x="102.4" y="40" width="3.2" height="6.4" fill="#f6b32c"/><rect x="102.7" y="51" width="2.8" height="2.8" fill="#8d8f93"/><rect x="110.1" y="38.6" width="6.6" height="9.2" fill="#26292e"/><rect x="111.8" y="40" width="3.2" height="6.4" fill="#f6b32c"/><rect x="112.1" y="51" width="2.8" height="2.8" fill="#8d8f93"/><rect x="119.6" y="38.6" width="6.6" height="9.2" fill="#26292e"/><rect x="121.3" y="40" width="3.2" height="6.4" fill="#2a2d33"/><rect x="121.6" y="51" width="2.8" height="2.8" fill="#8d8f93"/><rect x="129.0" y="38.6" width="6.6" height="9.2" fill="#26292e"/><rect x="130.7" y="40" width="3.2" height="6.4" fill="#2a2d33"/><rect x="131.0" y="51" width="2.8" height="2.8" fill="#8d8f93"/><rect x="138.5" y="38.6" width="6.6" height="9.2" fill="#26292e"/><rect x="140.2" y="40" width="3.2" height="6.4" fill="#f6b32c"/><rect x="140.5" y="51" width="2.8" height="2.8" fill="#8d8f93"/><rect x="147.9" y="38.6" width="6.6" height="9.2" fill="#26292e"/><rect x="149.6" y="40" width="3.2" height="6.4" fill="#f6b32c"/><rect x="149.9" y="51" width="2.8" height="2.8" fill="#8d8f93"/></g>
<g transform="translate(3683.0,2804.4)"><rect x="40.7" y="2.5" width="63.1" height="50" rx="6" fill="#fff" stroke="#6f7073" stroke-width="5"/><path d="M14 45.3H128Q142 45.3 142 59.3V96.3H0V59.3Q0 45.3 14 45.3Z" fill="url(#gg)"/><circle cx="14.7" cy="59.5" r="4.6" fill="#fff"/><path d="M40.7 86.8H103.8V109.4Q103.8 116.9 96.3 116.9H48.2Q40.7 116.9 40.7 109.4Z" fill="#fff" stroke="#33363a" stroke-width="5"/><path d="M55 94.7H89.2M55 104.1H89.2" stroke="#33363a" stroke-width="3.6"/></g>
<polygon points="1122.6,1798.3 1135.1,1791.0 1135.1,1805.5" fill="#7b8fa9"/>
<polygon points="1239.2,1798.3 1226.7,1791.0 1226.7,1805.5" fill="#7b8fa9"/>
<path d="M1140.1 1798.3H1222.0" fill="none" stroke="#7b8fa9" stroke-width="3" stroke-dasharray="11.5 11.97"/>
<polygon points="1717.0,1718.6 1729.5,1711.3 1729.5,1725.8" fill="#7b8fa9"/>
<polygon points="1832.8,1718.6 1820.3,1711.3 1820.3,1725.8" fill="#7b8fa9"/>
<path d="M1734.5 1718.6H1815.6" fill="none" stroke="#7b8fa9" stroke-width="3" stroke-dasharray="11.5 11.70"/>
<polygon points="1717.0,1992.6 1729.5,1985.3 1729.5,1999.8" fill="#7b8fa9"/>
<polygon points="1832.8,1992.6 1820.3,1985.3 1820.3,1999.8" fill="#7b8fa9"/>
<path d="M1734.5 1992.6H1815.6" fill="none" stroke="#7b8fa9" stroke-width="3" stroke-dasharray="11.5 11.70"/>
<polygon points="3025.0,1718.6 3037.5,1711.3 3037.5,1725.8" fill="#b5becc"/>
<polygon points="3140.3,1718.6 3127.8,1711.3 3127.8,1725.8" fill="#b5becc"/>
<path d="M3042.5 1718.6H3123.1" fill="none" stroke="#b5becc" stroke-width="2.5" stroke-dasharray="11.5 11.53"/>
<polygon points="3025.0,1992.6 3037.5,1985.3 3037.5,1999.8" fill="#b5becc"/>
<polygon points="3140.3,1992.6 3127.8,1985.3 3127.8,1999.8" fill="#b5becc"/>
<path d="M3042.5 1992.6H3123.1" fill="none" stroke="#b5becc" stroke-width="2.5" stroke-dasharray="11.5 11.53"/>
<polygon points="3618.7,1798.3 3631.2,1791.0 3631.2,1805.5" fill="#b5becc"/>
<polygon points="3735.1,1798.3 3722.6,1791.0 3722.6,1805.5" fill="#b5becc"/>
<path d="M3636.2 1798.3H3717.9" fill="none" stroke="#b5becc" stroke-width="2.5" stroke-dasharray="11.5 11.90"/>
<polygon points="2233.3,1724.0 2245.8,1716.8 2245.8,1731.2" fill="#7b8fa9"/>
<path d="M2253 1724H2346" fill="none" stroke="#7b8fa9" stroke-width="3" stroke-dasharray="12.7 14.2"/>
<path d="M2512 1724H2606" fill="none" stroke="#7b8fa9" stroke-width="3" stroke-dasharray="12.7 14.2"/>
<polygon points="2624.0,1724.0 2611.5,1716.8 2611.5,1731.2" fill="#7b8fa9"/>
<rect x="2355.95" y="1651.95" width="144.1" height="144.3" rx="19.25" fill="#fff"/>
<rect x="2357.2" y="1653.2" width="141.6" height="141.8" rx="18" fill="none" stroke="#7b8fa9" stroke-width="2.5" stroke-dasharray="6.373 8.111"/>
<g transform="translate(2383.2,1663.7)"><path d="M0 17V103A44.85 17 0 0 0 89.7 103V17A44.85 17 0 0 0 0 17Z" fill="url(#gg)"/><ellipse cx="44.7" cy="16.3" rx="31.9" ry="9.7" fill="#fff"/><g fill="none" stroke="#fff" stroke-width="7.6"><path d="M33.7 50.7A21.6 21.6 0 0 1 66.6 70.5"/><path d="M56.5 87.3A21.6 21.6 0 0 1 23.6 67.5"/></g><path d="M51.2 71.2H80.4L64.4 88.9Z" fill="#fff"/><path d="M8.7 66.8H38.5L25.2 50.2Z" fill="#fff"/></g>
<polygon points="1336.5,2295.0 1329.2,2307.5 1343.8,2307.5" fill="#7b8fa9"/>
<polygon points="1336.5,2402.4 1329.2,2389.9 1343.8,2389.9" fill="#7b8fa9"/>
<path d="M1336.5 2317.5V2385.9" fill="none" stroke="#7b8fa9" stroke-width="3" stroke-dasharray="12.7 14.2"/>
<polygon points="3537.0,2295.0 3529.8,2307.5 3544.2,2307.5" fill="#b5becc"/>
<polygon points="3537.0,2402.4 3529.8,2389.9 3544.2,2389.9" fill="#b5becc"/>
<path d="M3537 2317.5V2385.9" fill="none" stroke="#b5becc" stroke-width="2.5" stroke-dasharray="12.7 14.2"/>
<polygon points="1495.5,2303.5 1488.2,2316.0 1502.8,2316.0" fill="#7b8fa9"/>
<path d="M1495.5 2321V2351.5Q1495.5 2363.5 1507.5 2363.5H2346" fill="none" stroke="#7b8fa9" stroke-width="3" stroke-dasharray="12.7 14.2"/>
<polygon points="3330.0,2303.5 3322.8,2316.0 3337.2,2316.0" fill="#7b8fa9"/>
<path d="M3330 2321V2351.5Q3330 2363.5 3318 2363.5H2512" fill="none" stroke="#7b8fa9" stroke-width="3" stroke-dasharray="12.7 14.2"/>
<rect x="2355.95" y="2291.95" width="144.1" height="142.9" rx="19.25" fill="#fff"/>
<rect x="2357.2" y="2293.2" width="141.6" height="140.4" rx="18" fill="none" stroke="#7b8fa9" stroke-width="2.5" stroke-dasharray="6.340 8.069"/>
<g transform="translate(2383.2,2303.2)"><path d="M0 17V103A44.85 17 0 0 0 89.7 103V17A44.85 17 0 0 0 0 17Z" fill="url(#gg)"/><ellipse cx="44.7" cy="16.3" rx="31.9" ry="9.7" fill="#fff"/><g fill="none" stroke="#fff" stroke-width="7.6"><path d="M33.7 50.7A21.6 21.6 0 0 1 66.6 70.5"/><path d="M56.5 87.3A21.6 21.6 0 0 1 23.6 67.5"/></g><path d="M51.2 71.2H80.4L64.4 88.9Z" fill="#fff"/><path d="M8.7 66.8H38.5L25.2 50.2Z" fill="#fff"/></g>
<polygon points="860.3,2060.3 853.0,2072.8 867.5,2072.8" fill="#7b8fa9"/>
<path d="M860.3 2080V2794Q860.3 2806 872.3 2806H955" fill="none" stroke="#7b8fa9" stroke-width="3" stroke-dasharray="12.7 14.2"/>
<polygon points="973.0,2806.0 960.5,2798.8 960.5,2813.2" fill="#7b8fa9"/>
<polygon points="4010.0,2060.3 4002.8,2072.8 4017.2,2072.8" fill="#b5becc"/>
<path d="M4010 2080V2794Q4010 2806 3998 2806H3905" fill="none" stroke="#b5becc" stroke-width="2.5" stroke-dasharray="12.7 14.2"/>
<polygon points="3887.0,2806.0 3899.5,2798.8 3899.5,2813.2" fill="#b5becc"/>
</svg>
</body></html>
